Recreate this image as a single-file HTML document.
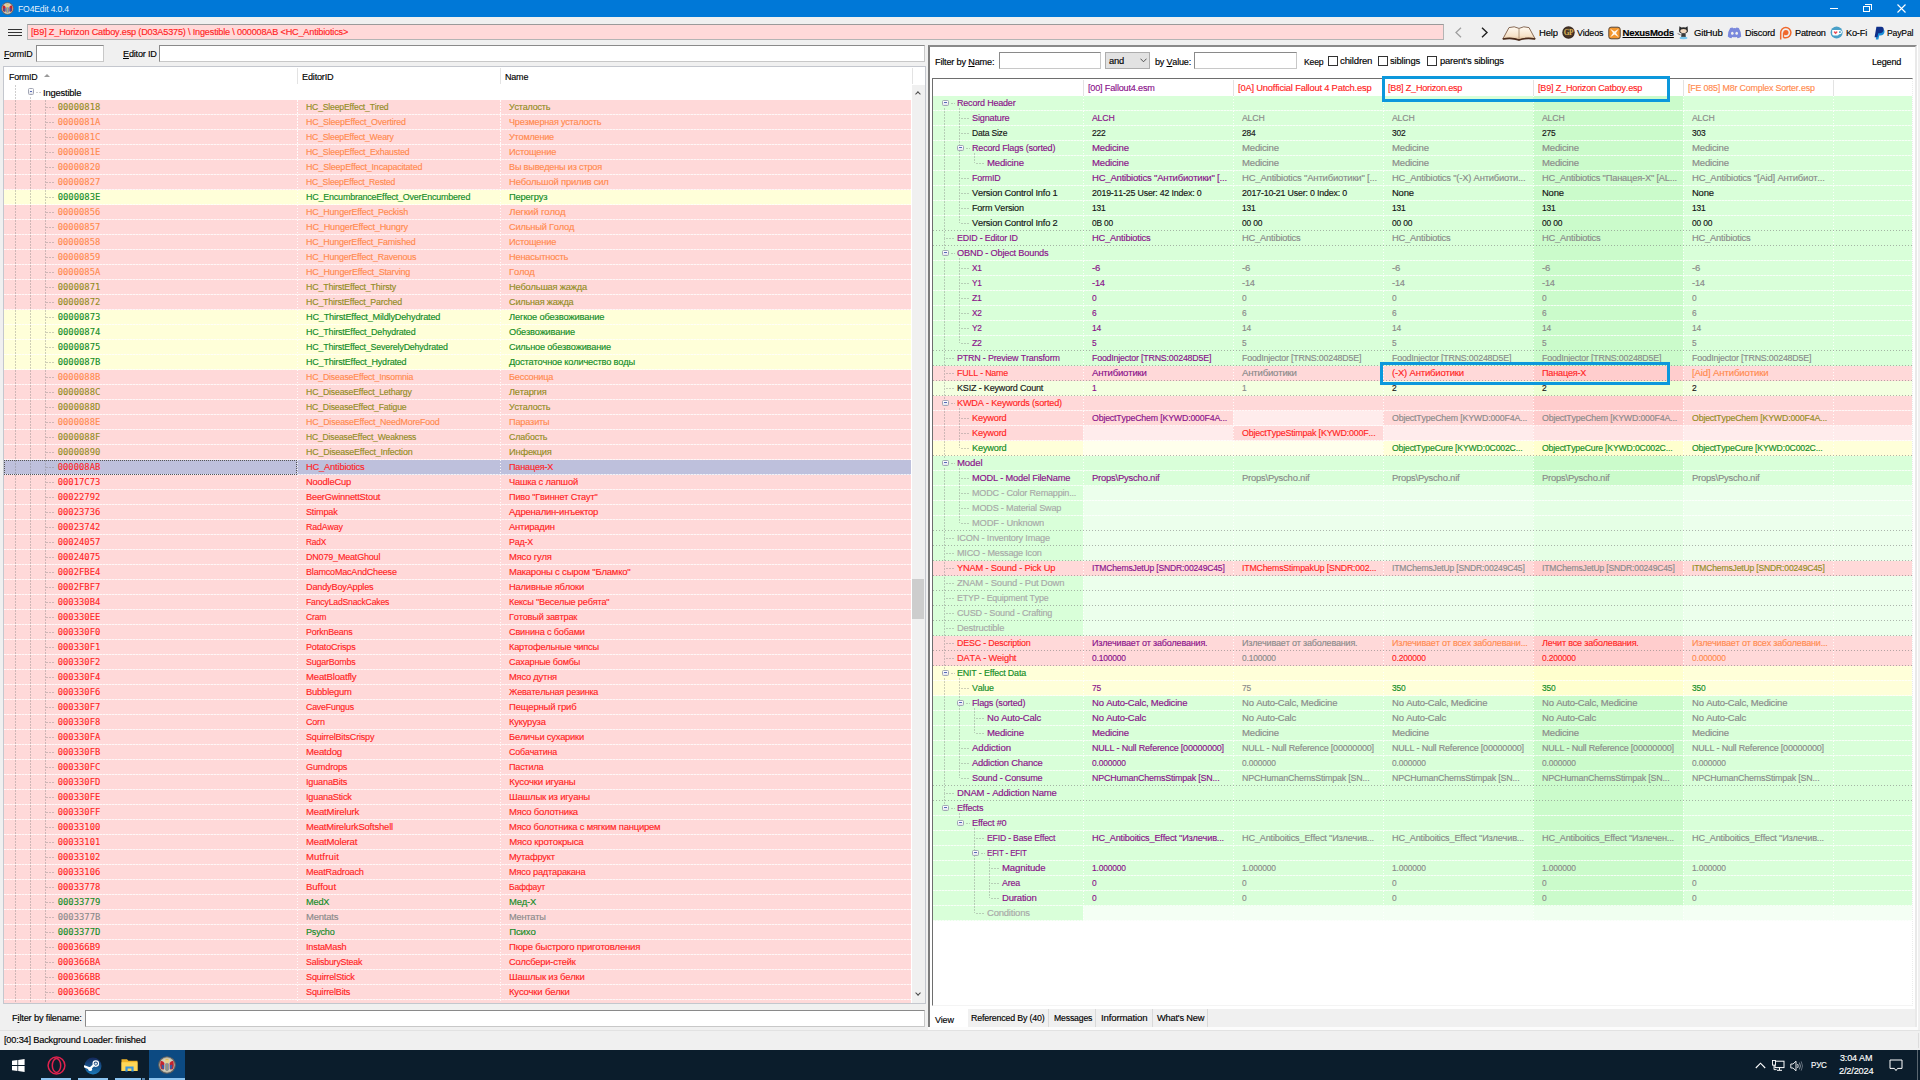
<!DOCTYPE html><html><head><meta charset="utf-8"><title>FO4Edit 4.0.4</title><style>*{margin:0;padding:0;box-sizing:border-box}
html,body{width:1920px;height:1080px;overflow:hidden;background:#f0f0f0}
body{position:relative;font-family:"Liberation Sans",sans-serif;font-size:9.6px;font-kerning:none;color:#000;line-height:14px;-webkit-text-stroke:0.15px}
span{transform-origin:0 50%}
i,b{display:block;position:absolute;font-style:normal;font-weight:normal}
.abs{position:absolute;white-space:nowrap}
.pu{color:#8a108a}.gy{color:#8a8a8a}.rd{color:#ff2424}.or{color:#ff8a4e}.gn{color:#128c26}.ol{color:#938c1e}.bk{color:#141414}.lg{color:#a8a8a8}
.rb{color:#ff0000;font-weight:bold}
#title{position:absolute;left:0;top:0;width:1920px;height:17.3px;background:#0078d7;color:#fff}
#title span{position:absolute;left:17.5px;top:1.6px;-webkit-text-stroke:0;color:rgba(255,255,255,.93)}
input,.inp{position:absolute;background:#fff;border:1px solid #7a7a7a}
.inp{border-color:#8a8a8a #c8c8c8 #c8c8c8 #8a8a8a}
#path{position:absolute;left:26.6px;top:24px;width:1417px;height:15.5px;background:#ffd9d9;border:1px solid #b4b4b4;border-top-color:#9a9a9a;color:#ff2424}
#path span{position:absolute;left:3.2px;top:0px;white-space:nowrap}
.tb{position:absolute;top:25.5px;white-space:nowrap;line-height:14px}
/* left tree */
#ltree{position:absolute;left:3px;top:66px;width:922.5px;height:937.5px;border:1px solid #c4c7ce;background:#fff;overflow:hidden}
#ltree span,#rtree span{position:absolute;white-space:nowrap;top:0}
.lhdr{position:absolute;left:0;top:0;width:921px;height:18px;background:#fff;line-height:18px}
.lhdr span{top:0.5px !important}
.hsep{width:1px;top:1px;height:16px;background:#e3e3e3}
.sortarr{left:39.5px;top:6.5px;width:0;height:0;border-left:3.2px solid transparent;border-right:3.2px solid transparent;border-bottom:3.6px solid #9a9a9a}
.lrow0{position:absolute;left:0;top:18px;width:907px;height:15px;line-height:14px}
.lrow0 span{top:0.5px !important}
.lr{position:absolute;left:0;width:907px;height:15px;line-height:14.5px}
.lr:after{content:"";position:absolute;left:0;right:0;bottom:0;height:1px;background:repeating-linear-gradient(90deg,rgba(255,255,255,.8) 0 2.2px,rgba(255,255,255,.4) 2.2px 3px)}
.lr.p{background:#ffd9d9}.lr.y{background:#ffffd9}.lr.s{background:#bec0dc}
.m{font-family:"DejaVu Sans Mono","Liberation Mono",monospace;font-size:8.85px;letter-spacing:0;-webkit-text-stroke:0.1px}

.box{z-index:2;width:6.8px;height:6.8px;border:1px solid #a2a6b4;border-radius:1.5px;background:linear-gradient(#fff,#e2e4ec)}
.box:after{content:"";position:absolute;left:1px;right:1px;top:1.9px;height:1px;background:#5568b8}
.hdot{height:1px;background:repeating-linear-gradient(90deg,rgba(120,120,120,.36) 0 2px,transparent 2px 3px)}
.vdot{width:1px;background:repeating-linear-gradient(180deg,rgba(120,120,120,.36) 0 2px,transparent 2px 3px)}
.vsep{width:1px;background:repeating-linear-gradient(180deg,rgba(255,255,255,.9) 0 1.5px,transparent 1.5px 3px)}
.focus{position:absolute;left:0;width:293px;height:15px;border:1px dotted #555}
.lscroll{position:absolute;left:907.5px;top:18px;width:13.5px;height:918px;background:#f0f0f0}
.thumb{left:0.5px;top:494px;width:11.5px;height:40px;background:#cdcdcd}
.sa{left:3.5px;width:6px;height:6px}
.sa:before{content:"";position:absolute;left:1.2px;top:1.6px;width:2.9px;height:2.9px;border-left:1.3px solid #4a4a4a;border-top:1.3px solid #4a4a4a;transform:rotate(45deg)}
.sa.up{top:5px}
.sa.dn{top:906px;transform:rotate(180deg)}
/* right panel */
#rpanel{position:absolute;left:928px;top:45px;width:989px;height:982px;background:linear-gradient(#fff 0,#fff 962.3px,#f0f0f0 962.3px);border-left:2px solid #7c7c7c;border-top:2px solid #8a8a8a;border-right:2.5px solid #e9e9e9;border-bottom:none;box-shadow:1px 0 0 #fff}
#rtree{position:absolute;left:932px;top:78px;width:981px;height:928px;border:1px solid #6e6e6e;border-right:1px dotted #ececec;border-bottom-color:#f4f4f4;background:#fff;overflow:hidden}
.rhdr{position:absolute;left:0;top:0;width:979px;height:17px;background:#fff;line-height:17.4px}
.rr{position:absolute;left:0;width:979px;height:15px;line-height:14px}
.rr:after{content:"";position:absolute;left:0;right:0;bottom:0;height:1px;background:repeating-linear-gradient(90deg,rgba(255,255,255,.8) 0 2.2px,rgba(255,255,255,.4) 2.2px 3px)}
.rr.gl:after{background:repeating-linear-gradient(90deg,rgba(120,120,120,.55) 0 1.5px,transparent 1.5px 3px)}
.cb{top:0;height:15px}
.coltint{background:rgba(0,60,0,.055)}
.vsep2{width:1px;background:repeating-linear-gradient(180deg,rgba(255,255,255,.9) 0 1.5px,transparent 1.5px 3px)}
.hl{position:absolute;border:3.4px solid #0c98dc}
.chk{position:absolute;width:10px;height:10px;border:1px solid #333;background:#fff;top:55.5px}
/* tabs */
.tab{position:absolute;top:1009px;height:17.5px;border-right:1px solid #d9d9d9;line-height:16px}
/* taskbar */
#task{position:absolute;left:0;top:1050px;width:1920px;height:30px;background:#0b1d2c;color:#fff}
</style></head><body>
<div id="title">
<svg style="position:absolute;left:1px;top:2px" width="13" height="13" viewBox="0 0 13 13"><circle cx="6.5" cy="6.5" r="6" fill="#b9b5a6" stroke="#5c5c5c" stroke-width="0.8"/><circle cx="6.5" cy="6.5" r="4.9" fill="#d6cfb8"/><path d="M1.9 3.6 Q3.6 3.2 4.6 5 L4.4 9.6 Q3 10.2 2 9 Q1.2 6.4 1.9 3.6 Z" fill="#c4222c"/><path d="M11.1 3.6 Q9.4 3.2 8.4 5 L8.6 9.6 Q10 10.2 11 9 Q11.8 6.4 11.1 3.6 Z" fill="#c4222c"/><path d="M2.6 6.2 L4.4 6.6 L4.4 9.4 L2.8 9 Z" fill="#3a58a0"/><path d="M10.4 6.2 L8.6 6.6 L8.6 9.4 L10.2 9 Z" fill="#3a58a0"/><ellipse cx="6.5" cy="3.6" rx="1.5" ry="1.7" fill="#e8cf86"/><path d="M5.2 2.8 Q6.5 1 7.8 2.8 Q6.5 2.2 5.2 2.8Z" fill="#e0b040"/><rect x="5.4" y="5.2" width="2.2" height="5.4" rx="0.6" fill="#4060a8"/><rect x="6.15" y="5.2" width="0.7" height="5.4" fill="#e4cc5a"/></svg>
<span style="letter-spacing:-0.200px;transform:scaleX(0.9006)">FO4Edit 4.0.4</span>
<i style="left:1829.5px;top:7.5px;width:8px;height:1px;background:#fff"></i>
<i style="left:1863px;top:5.5px;width:6.5px;height:6.5px;border:1px solid #fff"></i>
<i style="left:1865px;top:3.8px;width:6.5px;height:6.5px;border-top:1px solid #fff;border-right:1px solid #fff"></i>
<svg style="position:absolute;left:1897px;top:3.5px" width="9" height="9" viewBox="0 0 9 9"><path d="M0.5 0.5 L8.5 8.5 M8.5 0.5 L0.5 8.5" stroke="#fff" stroke-width="1.1" fill="none"/></svg>
</div>
<!-- hamburger -->
<i style="left:8px;top:29px;width:14px;height:1.1px;background:#333"></i><i style="left:8px;top:32px;width:14px;height:1.1px;background:#333"></i><i style="left:8px;top:35px;width:14px;height:1.1px;background:#333"></i>
<div id="path"><span style="letter-spacing:-0.200px;transform:scaleX(0.9526)">[B9] Z_Horizon Catboy.esp (D03A5375) \ Ingestible \ 000008AB &lt;HC_Antibiotics&gt;</span></div>
<!-- nav arrows -->
<svg style="position:absolute;left:1454px;top:27px" width="9" height="11" viewBox="0 0 9 11"><path d="M7 0.8 L2 5.5 L7 10.2" stroke="#a0a0a0" stroke-width="1.3" fill="none"/></svg>
<svg style="position:absolute;left:1479.5px;top:27px" width="9" height="11" viewBox="0 0 9 11"><path d="M2 0.8 L7 5.5 L2 10.2" stroke="#202020" stroke-width="1.4" fill="none"/></svg>
<!-- book -->
<svg style="position:absolute;left:1502px;top:24.5px" width="34" height="16" viewBox="0 0 34 16"><defs><linearGradient id="bk" x1="0" y1="0" x2="0" y2="1"><stop offset="0" stop-color="#fffaf2"/><stop offset="0.7" stop-color="#f6e2c8"/><stop offset="1" stop-color="#d8b48c"/></linearGradient></defs><path d="M0.8 14 L7 2.6 Q12.4 0.6 17 3.4 Q21.6 0.6 27 2.6 L33.2 14 Q24 12.4 17 15 Q10 12.4 0.8 14 Z" fill="url(#bk)" stroke="#7a5a44" stroke-width="0.9"/><path d="M17 3.4 L17 14.6" stroke="#a08468" stroke-width="0.8"/><path d="M0.8 14 Q10 12.4 17 15 Q24 12.4 33.2 14" stroke="#4a2c1c" stroke-width="1.7" fill="none"/></svg>
<span class="tb" style="left:1539px;letter-spacing:-0.200px;transform:scaleX(0.9901)">Help</span>
<svg style="position:absolute;left:1562px;top:26px" width="13" height="13" viewBox="0 0 13 13"><circle cx="6.5" cy="6.5" r="6.2" fill="#3a2a22"/><circle cx="6.5" cy="6.5" r="5" fill="#4a3828"/><text x="6.5" y="9.2" font-family="Liberation Serif" font-weight="bold" font-size="7.4" fill="#d8b45a" text-anchor="middle" letter-spacing="-0.4">GP</text></svg>
<span class="tb" style="left:1577px;letter-spacing:-0.200px;transform:scaleX(0.9326)">Videos</span>
<svg style="position:absolute;left:1608px;top:25.5px" width="13" height="14" viewBox="0 0 13 14"><rect x="0.8" y="1.2" width="11.4" height="11.6" rx="2.2" fill="#f4962c" stroke="#5a4634" stroke-width="1"/><path d="M2.2 2.8 L6.5 5.6 L10.8 2.8 L8 7 L10.8 11.2 L6.5 8.4 L2.2 11.2 L5 7 Z" fill="#fff6ea"/></svg>
<span class="tb" style="left:1622.5px;font-weight:bold;text-decoration:underline;letter-spacing:-0.28px">NexusMods</span>
<svg style="position:absolute;left:1677px;top:25px" width="13" height="15" viewBox="0 0 13 15"><path d="M2.4 1.2 L4.4 2.6 Q6.5 2 8.6 2.6 L10.6 1.2 L10.8 4.4 Q11.6 6.4 10 7.8 Q8.4 8.8 6.5 8.8 Q4.6 8.8 3 7.8 Q1.4 6.4 2.2 4.4 Z" fill="#2a2a2a"/><ellipse cx="6.5" cy="6" rx="3.2" ry="2" fill="#f0d8c0"/><path d="M4.4 8.6 L4.2 12.4 L8.8 12.4 L8.6 8.6 Z" fill="#3a3a3a"/><ellipse cx="6.5" cy="13" rx="4" ry="1.2" fill="#78c8f0"/><path d="M0.6 8.6 L3.6 9.8" stroke="#555" stroke-width="0.8"/></svg>
<span class="tb" style="left:1694px;letter-spacing:-0.200px;transform:scaleX(0.9939)">GitHub</span>
<svg style="position:absolute;left:1727px;top:26.5px" width="15" height="12" viewBox="0 0 15 12"><path d="M3.2 1 Q5 0.3 5.6 0.5 L6 1.2 Q7.5 1 9 1.2 L9.4 0.5 Q10 0.3 11.8 1 Q14.2 4.6 14.2 9.4 Q12.6 10.8 10.6 11.2 L9.8 9.9 Q7.5 10.5 5.2 9.9 L4.4 11.2 Q2.4 10.8 0.8 9.4 Q0.8 4.6 3.2 1 Z" fill="#7a88dc"/><ellipse cx="5.3" cy="6.3" rx="1.3" ry="1.5" fill="#f0f0f0"/><ellipse cx="9.7" cy="6.3" rx="1.3" ry="1.5" fill="#f0f0f0"/></svg>
<span class="tb" style="left:1745px;letter-spacing:-0.200px;transform:scaleX(0.9636)">Discord</span>
<svg style="position:absolute;left:1779px;top:25.5px" width="13" height="14" viewBox="0 0 13 14"><path d="M1.7 13.6 L1.7 6.6 A5.1 5.1 0 1 1 6.8 11.7 L4.6 11.7" fill="none" stroke="#f0682c" stroke-width="1.5"/><circle cx="6.9" cy="6.6" r="2.6" fill="#f0682c"/><path d="M4.5 6.6 L4.5 11.7" stroke="#f0682c" stroke-width="1.4"/></svg>
<span class="tb" style="left:1795px;letter-spacing:-0.200px;transform:scaleX(0.9544)">Patreon</span>
<svg style="position:absolute;left:1830px;top:26px" width="14" height="13" viewBox="0 0 14 13"><circle cx="6.6" cy="6.5" r="6" fill="#4aa0c8"/><path d="M2.2 4 L9 4 L9 8 Q9 9.4 7.6 9.4 L3.6 9.4 Q2.2 9.4 2.2 8 Z" fill="#fff"/><path d="M9 4.6 Q11.6 4.4 11.4 6.2 Q11.2 7.8 9 7.6" fill="none" stroke="#fff" stroke-width="1.1"/><path d="M5.6 8.2 L3.8 6.4 Q3.4 5.4 4.4 5.2 Q5.2 5.2 5.6 5.9 Q6 5.2 6.8 5.2 Q7.8 5.4 7.4 6.4 Z" fill="#e8505a"/></svg>
<span class="tb" style="left:1845.5px;letter-spacing:-0.200px;transform:scaleX(0.9574)">Ko-Fi</span>
<svg style="position:absolute;left:1873.5px;top:25.5px" width="12" height="14" viewBox="0 0 12 14"><path d="M3.4 3 L8 3 Q11 3.4 10.4 6.4 Q9.6 9.4 6.4 9.4 L5.2 9.4 L4.4 13.4 L1.8 13.4 Z" fill="#1a90d8"/><path d="M2.4 0.8 L7.2 0.8 Q10.2 1.2 9.6 4.2 Q8.8 7.2 5.6 7.2 L4.2 7.2 L3.4 11.2 L0.6 11.2 Z" fill="#10308a"/></svg>
<span class="tb" style="left:1886.5px;letter-spacing:-0.200px;transform:scaleX(0.8986)">PayPal</span>
<!-- FormID / Editor ID -->
<span class="abs" style="left:4px;top:47px;letter-spacing:-0.200px;transform:scaleX(0.9254)"><u>F</u>ormID</span>
<div class="inp" style="left:36px;top:45px;width:67.5px;height:17px"></div>
<span class="abs" style="left:123px;top:47px;letter-spacing:-0.200px;transform:scaleX(0.9495)"><u>E</u>ditor ID</span>
<div class="inp" style="left:159px;top:45px;width:765.5px;height:17px"></div>
<!-- right panel frame -->
<div id="rpanel"></div>
<span class="abs" style="left:934.5px;top:55px;letter-spacing:-0.200px;transform:scaleX(0.9544)">Filter by <u>N</u>ame:</span>
<div class="inp" style="left:999px;top:52px;width:102px;height:16.5px"></div>
<div class="abs" style="left:1105px;top:52px;width:45px;height:16.5px;background:#e2e2e2;border:1px solid #adadad"><span style="position:absolute;left:3px;top:0.5px;letter-spacing:-0.200px;transform:scaleX(0.9732)">and</span><svg style="position:absolute;left:34px;top:5px" width="7" height="5" viewBox="0 0 7 5"><path d="M0.5 0.7 L3.5 3.8 L6.5 0.7" stroke="#444" stroke-width="0.9" fill="none"/></svg></div>
<span class="abs" style="left:1154.5px;top:55px;letter-spacing:-0.200px;transform:scaleX(0.9419)">by <u>V</u>alue:</span>
<div class="inp" style="left:1194px;top:52px;width:103px;height:16.5px"></div>
<span class="abs" style="left:1304px;top:55px;letter-spacing:-0.200px;transform:scaleX(0.9021)">Keep</span>
<i class="chk" style="left:1327.5px"></i><span class="abs" style="left:1340px;top:54.2px;letter-spacing:-0.170px">children</span>
<i class="chk" style="left:1377.5px"></i><span class="abs" style="left:1390px;top:54.2px;letter-spacing:-0.200px;transform:scaleX(0.9866)">siblings</span>
<i class="chk" style="left:1427px"></i><span class="abs" style="left:1439.5px;top:54.2px;letter-spacing:-0.200px;transform:scaleX(0.9789)">parent's siblings</span>
<span class="abs" style="left:1871.5px;top:54.8px;letter-spacing:-0.200px;transform:scaleX(0.9489)">Legend</span>

<div id="ltree">
<div class="lhdr"><span style="left:4.5px;letter-spacing:-0.200px;transform:scaleX(0.9254)">FormID</span><i class="sortarr"></i><b class="hsep" style="left:292.5px"></b><span style="left:297.5px;letter-spacing:-0.200px;transform:scaleX(0.9524)">EditorID</span><b class="hsep" style="left:496px"></b><span style="left:500.8px;letter-spacing:-0.200px;transform:scaleX(0.9374)">Name</span><b class="hsep" style="left:908px"></b></div>
<div class="lrow0"><i class="box" style="left:23.6px;top:3.2px"></i><i class="hdot" style="left:32px;width:5px;top:7px"></i><span style="left:39px;letter-spacing:-0.200px;transform:scaleX(0.9786)">Ingestible</span></div>
<div class="lr p ol" style="top:33px"><i class="hdot" style="left:42px;width:9px;top:7px"></i><span class="m" style="left:53.7px">00000818</span><span class="e" style="left:302px;letter-spacing:-0.200px;transform:scaleX(0.9016)">HC_SleepEffect_Tired</span><span class="n" style="left:505.3px;letter-spacing:-0.200px;transform:scaleX(0.9381)">Усталость</span></div>
<div class="lr p or" style="top:48px"><i class="hdot" style="left:42px;width:9px;top:7px"></i><span class="m" style="left:53.7px">0000081A</span><span class="e" style="left:302px;letter-spacing:-0.200px;transform:scaleX(0.9210)">HC_SleepEffect_Overtired</span><span class="n" style="left:505.3px;letter-spacing:-0.200px;transform:scaleX(0.9437)">Чрезмерная усталость</span></div>
<div class="lr p or" style="top:63px"><i class="hdot" style="left:42px;width:9px;top:7px"></i><span class="m" style="left:53.7px">0000081C</span><span class="e" style="left:302px;letter-spacing:-0.200px;transform:scaleX(0.9012)">HC_SleepEffect_Weary</span><span class="n" style="left:505.3px;letter-spacing:-0.200px;transform:scaleX(0.9457)">Утомление</span></div>
<div class="lr p or" style="top:78px"><i class="hdot" style="left:42px;width:9px;top:7px"></i><span class="m" style="left:53.7px">0000081E</span><span class="e" style="left:302px;letter-spacing:-0.200px;transform:scaleX(0.9064)">HC_SleepEffect_Exhausted</span><span class="n" style="left:505.3px;letter-spacing:-0.200px;transform:scaleX(0.9667)">Истощение</span></div>
<div class="lr p or" style="top:93px"><i class="hdot" style="left:42px;width:9px;top:7px"></i><span class="m" style="left:53.7px">00000820</span><span class="e" style="left:302px;letter-spacing:-0.200px;transform:scaleX(0.9290)">HC_SleepEffect_Incapacitated</span><span class="n" style="left:505.3px;letter-spacing:-0.200px;transform:scaleX(0.9515)">Вы выведены из строя</span></div>
<div class="lr p or" style="top:108px"><i class="hdot" style="left:42px;width:9px;top:7px"></i><span class="m" style="left:53.7px">00000827</span><span class="e" style="left:302px;letter-spacing:-0.200px;transform:scaleX(0.8939)">HC_SleepEffect_Rested</span><span class="n" style="left:505.3px;letter-spacing:-0.200px;transform:scaleX(0.9856)">Небольшой прилив сил</span></div>
<div class="lr y gn" style="top:123px"><i class="hdot" style="left:42px;width:9px;top:7px"></i><span class="m" style="left:53.7px">0000083E</span><span class="e" style="left:302px;letter-spacing:-0.200px;transform:scaleX(0.9304)">HC_EncumbranceEffect_OverEncumbered</span><span class="n" style="left:505.3px;letter-spacing:-0.200px;transform:scaleX(0.9717)">Перегруз</span></div>
<div class="lr p or" style="top:138px"><i class="hdot" style="left:42px;width:9px;top:7px"></i><span class="m" style="left:53.7px">00000856</span><span class="e" style="left:302px;letter-spacing:-0.200px;transform:scaleX(0.9309)">HC_HungerEffect_Peckish</span><span class="n" style="left:505.3px;letter-spacing:-0.157px">Легкий голод</span></div>
<div class="lr p or" style="top:153px"><i class="hdot" style="left:42px;width:9px;top:7px"></i><span class="m" style="left:53.7px">00000857</span><span class="e" style="left:302px;letter-spacing:-0.200px;transform:scaleX(0.9523)">HC_HungerEffect_Hungry</span><span class="n" style="left:505.3px;letter-spacing:-0.200px;transform:scaleX(0.9648)">Сильный Голод</span></div>
<div class="lr p or" style="top:168px"><i class="hdot" style="left:42px;width:9px;top:7px"></i><span class="m" style="left:53.7px">00000858</span><span class="e" style="left:302px;letter-spacing:-0.200px;transform:scaleX(0.9287)">HC_HungerEffect_Famished</span><span class="n" style="left:505.3px;letter-spacing:-0.200px;transform:scaleX(0.9667)">Истощение</span></div>
<div class="lr p or" style="top:183px"><i class="hdot" style="left:42px;width:9px;top:7px"></i><span class="m" style="left:53.7px">00000859</span><span class="e" style="left:302px;letter-spacing:-0.200px;transform:scaleX(0.9266)">HC_HungerEffect_Ravenous</span><span class="n" style="left:505.3px;letter-spacing:-0.200px;transform:scaleX(0.9644)">Ненасытность</span></div>
<div class="lr p or" style="top:198px"><i class="hdot" style="left:42px;width:9px;top:7px"></i><span class="m" style="left:53.7px">0000085A</span><span class="e" style="left:302px;letter-spacing:-0.200px;transform:scaleX(0.9394)">HC_HungerEffect_Starving</span><span class="n" style="left:505.3px;letter-spacing:-0.200px;transform:scaleX(0.9773)">Голод</span></div>
<div class="lr p ol" style="top:213px"><i class="hdot" style="left:42px;width:9px;top:7px"></i><span class="m" style="left:53.7px">00000871</span><span class="e" style="left:302px;letter-spacing:-0.200px;transform:scaleX(0.9251)">HC_ThirstEffect_Thirsty</span><span class="n" style="left:505.3px;letter-spacing:-0.200px;transform:scaleX(0.9659)">Небольшая жажда</span></div>
<div class="lr p ol" style="top:228px"><i class="hdot" style="left:42px;width:9px;top:7px"></i><span class="m" style="left:53.7px">00000872</span><span class="e" style="left:302px;letter-spacing:-0.200px;transform:scaleX(0.9210)">HC_ThirstEffect_Parched</span><span class="n" style="left:505.3px;letter-spacing:-0.200px;transform:scaleX(0.9494)">Сильная жажда</span></div>
<div class="lr y gn" style="top:243px"><i class="hdot" style="left:42px;width:9px;top:7px"></i><span class="m" style="left:53.7px">00000873</span><span class="e" style="left:302px;letter-spacing:-0.200px;transform:scaleX(0.9532)">HC_ThirstEffect_MildlyDehydrated</span><span class="n" style="left:505.3px;letter-spacing:-0.200px;transform:scaleX(0.9726)">Легкое обезвоживание</span></div>
<div class="lr y gn" style="top:258px"><i class="hdot" style="left:42px;width:9px;top:7px"></i><span class="m" style="left:53.7px">00000874</span><span class="e" style="left:302px;letter-spacing:-0.200px;transform:scaleX(0.9319)">HC_ThirstEffect_Dehydrated</span><span class="n" style="left:505.3px;letter-spacing:-0.200px;transform:scaleX(0.9596)">Обезвоживание</span></div>
<div class="lr y gn" style="top:273px"><i class="hdot" style="left:42px;width:9px;top:7px"></i><span class="m" style="left:53.7px">00000875</span><span class="e" style="left:302px;letter-spacing:-0.200px;transform:scaleX(0.9250)">HC_ThirstEffect_SeverelyDehydrated</span><span class="n" style="left:505.3px;letter-spacing:-0.200px;transform:scaleX(0.9569)">Сильное обезвоживание</span></div>
<div class="lr y gn" style="top:288px"><i class="hdot" style="left:42px;width:9px;top:7px"></i><span class="m" style="left:53.7px">0000087B</span><span class="e" style="left:302px;letter-spacing:-0.200px;transform:scaleX(0.9372)">HC_ThirstEffect_Hydrated</span><span class="n" style="left:505.3px;letter-spacing:-0.200px;transform:scaleX(0.9659)">Достаточное количество воды</span></div>
<div class="lr p or" style="top:303px"><i class="hdot" style="left:42px;width:9px;top:7px"></i><span class="m" style="left:53.7px">0000088B</span><span class="e" style="left:302px;letter-spacing:-0.200px;transform:scaleX(0.9112)">HC_DiseaseEffect_Insomnia</span><span class="n" style="left:505.3px;letter-spacing:-0.200px;transform:scaleX(0.9562)">Бессоница</span></div>
<div class="lr p ol" style="top:318px"><i class="hdot" style="left:42px;width:9px;top:7px"></i><span class="m" style="left:53.7px">0000088C</span><span class="e" style="left:302px;letter-spacing:-0.200px;transform:scaleX(0.9107)">HC_DiseaseEffect_Lethargy</span><span class="n" style="left:505.3px;letter-spacing:-0.200px;transform:scaleX(0.9571)">Летаргия</span></div>
<div class="lr p ol" style="top:333px"><i class="hdot" style="left:42px;width:9px;top:7px"></i><span class="m" style="left:53.7px">0000088D</span><span class="e" style="left:302px;letter-spacing:-0.200px;transform:scaleX(0.9056)">HC_DiseaseEffect_Fatigue</span><span class="n" style="left:505.3px;letter-spacing:-0.200px;transform:scaleX(0.9381)">Усталость</span></div>
<div class="lr p or" style="top:348px"><i class="hdot" style="left:42px;width:9px;top:7px"></i><span class="m" style="left:53.7px">0000088E</span><span class="e" style="left:302px;letter-spacing:-0.200px;transform:scaleX(0.9229)">HC_DiseaseEffect_NeedMoreFood</span><span class="n" style="left:505.3px;letter-spacing:-0.200px;transform:scaleX(0.9555)">Паразиты</span></div>
<div class="lr p ol" style="top:363px"><i class="hdot" style="left:42px;width:9px;top:7px"></i><span class="m" style="left:53.7px">0000088F</span><span class="e" style="left:302px;letter-spacing:-0.200px;transform:scaleX(0.8922)">HC_DiseaseEffect_Weakness</span><span class="n" style="left:505.3px;letter-spacing:-0.200px;transform:scaleX(0.9259)">Слабость</span></div>
<div class="lr p ol" style="top:378px"><i class="hdot" style="left:42px;width:9px;top:7px"></i><span class="m" style="left:53.7px">00000890</span><span class="e" style="left:302px;letter-spacing:-0.200px;transform:scaleX(0.9273)">HC_DiseaseEffect_Infection</span><span class="n" style="left:505.3px;letter-spacing:-0.200px;transform:scaleX(0.9691)">Инфекция</span></div>
<div class="lr s rd" style="top:393px"><i class="hdot" style="left:42px;width:9px;top:7px"></i><span class="m" style="left:53.7px">000008AB</span><span class="e" style="left:302px;letter-spacing:-0.200px;transform:scaleX(0.9726)">HC_Antibiotics</span><span class="n" style="left:505.3px;letter-spacing:-0.200px;transform:scaleX(0.9472)">Панацея-X</span></div>
<div class="lr p rd" style="top:408px"><i class="hdot" style="left:42px;width:9px;top:7px"></i><span class="m" style="left:53.7px">00017C73</span><span class="e" style="left:302px;letter-spacing:-0.200px;transform:scaleX(0.9736)">NoodleCup</span><span class="n" style="left:505.3px;letter-spacing:-0.200px;transform:scaleX(0.9736)">Чашка с лапшой</span></div>
<div class="lr p rd" style="top:423px"><i class="hdot" style="left:42px;width:9px;top:7px"></i><span class="m" style="left:53.7px">00022792</span><span class="e" style="left:302px;letter-spacing:-0.200px;transform:scaleX(0.9621)">BeerGwinnettStout</span><span class="n" style="left:505.3px;letter-spacing:-0.200px;transform:scaleX(0.9545)">Пиво "Гвиннет Стаут"</span></div>
<div class="lr p rd" style="top:438px"><i class="hdot" style="left:42px;width:9px;top:7px"></i><span class="m" style="left:53.7px">00023736</span><span class="e" style="left:302px;letter-spacing:-0.200px;transform:scaleX(0.9467)">Stimpak</span><span class="n" style="left:505.3px;letter-spacing:-0.200px;transform:scaleX(0.9865)">Адреналин-инъектор</span></div>
<div class="lr p rd" style="top:453px"><i class="hdot" style="left:42px;width:9px;top:7px"></i><span class="m" style="left:53.7px">00023742</span><span class="e" style="left:302px;letter-spacing:-0.200px;transform:scaleX(0.9262)">RadAway</span><span class="n" style="left:505.3px;letter-spacing:-0.200px;transform:scaleX(0.9815)">Антирадин</span></div>
<div class="lr p rd" style="top:468px"><i class="hdot" style="left:42px;width:9px;top:7px"></i><span class="m" style="left:53.7px">00024057</span><span class="e" style="left:302px;letter-spacing:-0.200px;transform:scaleX(0.8725)">RadX</span><span class="n" style="left:505.3px;letter-spacing:-0.200px;transform:scaleX(0.9250)">Рад-X</span></div>
<div class="lr p rd" style="top:483px"><i class="hdot" style="left:42px;width:9px;top:7px"></i><span class="m" style="left:53.7px">00024075</span><span class="e" style="left:302px;letter-spacing:-0.200px;transform:scaleX(0.9379)">DN079_MeatGhoul</span><span class="n" style="left:505.3px;letter-spacing:-0.200px;transform:scaleX(0.9868)">Мясо гуля</span></div>
<div class="lr p rd" style="top:498px"><i class="hdot" style="left:42px;width:9px;top:7px"></i><span class="m" style="left:53.7px">0002FBE4</span><span class="e" style="left:302px;letter-spacing:-0.200px;transform:scaleX(0.9385)">BlamcoMacAndCheese</span><span class="n" style="left:505.3px;letter-spacing:-0.200px;transform:scaleX(0.9898)">Макароны с сыром "Бламко"</span></div>
<div class="lr p rd" style="top:513px"><i class="hdot" style="left:42px;width:9px;top:7px"></i><span class="m" style="left:53.7px">0002FBF7</span><span class="e" style="left:302px;letter-spacing:-0.200px;transform:scaleX(0.9530)">DandyBoyApples</span><span class="n" style="left:505.3px;letter-spacing:-0.200px;transform:scaleX(0.9770)">Наливные яблоки</span></div>
<div class="lr p rd" style="top:528px"><i class="hdot" style="left:42px;width:9px;top:7px"></i><span class="m" style="left:53.7px">000330B4</span><span class="e" style="left:302px;letter-spacing:-0.200px;transform:scaleX(0.9006)">FancyLadSnackCakes</span><span class="n" style="left:505.3px;letter-spacing:-0.200px;transform:scaleX(0.9532)">Кексы "Веселые ребята"</span></div>
<div class="lr p rd" style="top:543px"><i class="hdot" style="left:42px;width:9px;top:7px"></i><span class="m" style="left:53.7px">000330EE</span><span class="e" style="left:302px;letter-spacing:-0.200px;transform:scaleX(0.8936)">Cram</span><span class="n" style="left:505.3px;letter-spacing:-0.200px;transform:scaleX(0.9555)">Готовый завтрак</span></div>
<div class="lr p rd" style="top:558px"><i class="hdot" style="left:42px;width:9px;top:7px"></i><span class="m" style="left:53.7px">000330F0</span><span class="e" style="left:302px;letter-spacing:-0.200px;transform:scaleX(0.9246)">PorknBeans</span><span class="n" style="left:505.3px;letter-spacing:-0.200px;transform:scaleX(0.9554)">Свинина с бобами</span></div>
<div class="lr p rd" style="top:573px"><i class="hdot" style="left:42px;width:9px;top:7px"></i><span class="m" style="left:53.7px">000330F1</span><span class="e" style="left:302px;letter-spacing:-0.200px;transform:scaleX(0.9420)">PotatoCrisps</span><span class="n" style="left:505.3px;letter-spacing:-0.200px;transform:scaleX(0.9602)">Картофельные чипсы</span></div>
<div class="lr p rd" style="top:588px"><i class="hdot" style="left:42px;width:9px;top:7px"></i><span class="m" style="left:53.7px">000330F2</span><span class="e" style="left:302px;letter-spacing:-0.200px;transform:scaleX(0.9254)">SugarBombs</span><span class="n" style="left:505.3px;letter-spacing:-0.200px;transform:scaleX(0.9500)">Сахарные бомбы</span></div>
<div class="lr p rd" style="top:603px"><i class="hdot" style="left:42px;width:9px;top:7px"></i><span class="m" style="left:53.7px">000330F4</span><span class="e" style="left:302px;letter-spacing:-0.200px">MeatBloatfly</span><span class="n" style="left:505.3px;letter-spacing:-0.200px;transform:scaleX(0.9734)">Мясо дутня</span></div>
<div class="lr p rd" style="top:618px"><i class="hdot" style="left:42px;width:9px;top:7px"></i><span class="m" style="left:53.7px">000330F6</span><span class="e" style="left:302px;letter-spacing:-0.200px;transform:scaleX(0.9785)">Bubblegum</span><span class="n" style="left:505.3px;letter-spacing:-0.200px;transform:scaleX(0.9397)">Жевательная резинка</span></div>
<div class="lr p rd" style="top:633px"><i class="hdot" style="left:42px;width:9px;top:7px"></i><span class="m" style="left:53.7px">000330F7</span><span class="e" style="left:302px;letter-spacing:-0.200px;transform:scaleX(0.9156)">CaveFungus</span><span class="n" style="left:505.3px;letter-spacing:-0.200px;transform:scaleX(0.9903)">Пещерный гриб</span></div>
<div class="lr p rd" style="top:648px"><i class="hdot" style="left:42px;width:9px;top:7px"></i><span class="m" style="left:53.7px">000330F8</span><span class="e" style="left:302px;letter-spacing:-0.200px;transform:scaleX(0.9374)">Corn</span><span class="n" style="left:505.3px;letter-spacing:-0.200px;transform:scaleX(0.9752)">Кукуруза</span></div>
<div class="lr p rd" style="top:663px"><i class="hdot" style="left:42px;width:9px;top:7px"></i><span class="m" style="left:53.7px">000330FA</span><span class="e" style="left:302px;letter-spacing:-0.200px;transform:scaleX(0.9392)">SquirrelBitsCrispy</span><span class="n" style="left:505.3px;letter-spacing:-0.200px;transform:scaleX(0.9683)">Беличьи сухарики</span></div>
<div class="lr p rd" style="top:678px"><i class="hdot" style="left:42px;width:9px;top:7px"></i><span class="m" style="left:53.7px">000330FB</span><span class="e" style="left:302px;letter-spacing:-0.193px">Meatdog</span><span class="n" style="left:505.3px;letter-spacing:-0.200px;transform:scaleX(0.9258)">Собачатина</span></div>
<div class="lr p rd" style="top:693px"><i class="hdot" style="left:42px;width:9px;top:7px"></i><span class="m" style="left:53.7px">000330FC</span><span class="e" style="left:302px;letter-spacing:-0.200px;transform:scaleX(0.9546)">Gumdrops</span><span class="n" style="left:505.3px;letter-spacing:-0.200px;transform:scaleX(0.9492)">Пастила</span></div>
<div class="lr p rd" style="top:708px"><i class="hdot" style="left:42px;width:9px;top:7px"></i><span class="m" style="left:53.7px">000330FD</span><span class="e" style="left:302px;letter-spacing:-0.200px;transform:scaleX(0.9513)">IguanaBits</span><span class="n" style="left:505.3px;letter-spacing:-0.200px">Кусочки игуаны</span></div>
<div class="lr p rd" style="top:723px"><i class="hdot" style="left:42px;width:9px;top:7px"></i><span class="m" style="left:53.7px">000330FE</span><span class="e" style="left:302px;letter-spacing:-0.200px;transform:scaleX(0.9539)">IguanaStick</span><span class="n" style="left:505.3px;letter-spacing:-0.200px;transform:scaleX(0.9918)">Шашлык из игуаны</span></div>
<div class="lr p rd" style="top:738px"><i class="hdot" style="left:42px;width:9px;top:7px"></i><span class="m" style="left:53.7px">000330FF</span><span class="e" style="left:302px;letter-spacing:-0.185px">MeatMirelurk</span><span class="n" style="left:505.3px;letter-spacing:-0.200px;transform:scaleX(0.9915)">Мясо болотника</span></div>
<div class="lr p rd" style="top:753px"><i class="hdot" style="left:42px;width:9px;top:7px"></i><span class="m" style="left:53.7px">00033100</span><span class="e" style="left:302px;letter-spacing:-0.200px;transform:scaleX(0.9877)">MeatMirelurkSoftshell</span><span class="n" style="left:505.3px;letter-spacing:-0.200px;transform:scaleX(0.9820)">Мясо болотника с мягким панцирем</span></div>
<div class="lr p rd" style="top:768px"><i class="hdot" style="left:42px;width:9px;top:7px"></i><span class="m" style="left:53.7px">00033101</span><span class="e" style="left:302px;letter-spacing:-0.200px">MeatMolerat</span><span class="n" style="left:505.3px;letter-spacing:-0.197px">Мясо кротокрыса</span></div>
<div class="lr p rd" style="top:783px"><i class="hdot" style="left:42px;width:9px;top:7px"></i><span class="m" style="left:53.7px">00033102</span><span class="e" style="left:302px;letter-spacing:0.124px">Mutfruit</span><span class="n" style="left:505.3px;letter-spacing:-0.200px;transform:scaleX(0.9658)">Мутафрукт</span></div>
<div class="lr p rd" style="top:798px"><i class="hdot" style="left:42px;width:9px;top:7px"></i><span class="m" style="left:53.7px">00033106</span><span class="e" style="left:302px;letter-spacing:-0.200px;transform:scaleX(0.9537)">MeatRadroach</span><span class="n" style="left:505.3px;letter-spacing:-0.200px;transform:scaleX(0.9601)">Мясо радтаракана</span></div>
<div class="lr p rd" style="top:813px"><i class="hdot" style="left:42px;width:9px;top:7px"></i><span class="m" style="left:53.7px">00033778</span><span class="e" style="left:302px;letter-spacing:-0.060px">Buffout</span><span class="n" style="left:505.3px;letter-spacing:-0.200px;transform:scaleX(0.8873)">Баффаут</span></div>
<div class="lr p gn" style="top:828px"><i class="hdot" style="left:42px;width:9px;top:7px"></i><span class="m" style="left:53.7px">00033779</span><span class="e" style="left:302px;letter-spacing:-0.200px;transform:scaleX(0.9578)">MedX</span><span class="n" style="left:505.3px;letter-spacing:-0.200px;transform:scaleX(0.9804)">Мед-X</span></div>
<div class="lr p gy" style="top:843px"><i class="hdot" style="left:42px;width:9px;top:7px"></i><span class="m" style="left:53.7px">0003377B</span><span class="e" style="left:302px;letter-spacing:-0.200px;transform:scaleX(0.9848)">Mentats</span><span class="n" style="left:505.3px;letter-spacing:-0.200px;transform:scaleX(0.9604)">Ментаты</span></div>
<div class="lr p gn" style="top:858px"><i class="hdot" style="left:42px;width:9px;top:7px"></i><span class="m" style="left:53.7px">0003377D</span><span class="e" style="left:302px;letter-spacing:-0.200px;transform:scaleX(0.9413)">Psycho</span><span class="n" style="left:505.3px;letter-spacing:-0.191px">Психо</span></div>
<div class="lr p rd" style="top:873px"><i class="hdot" style="left:42px;width:9px;top:7px"></i><span class="m" style="left:53.7px">000366B9</span><span class="e" style="left:302px;letter-spacing:-0.200px;transform:scaleX(0.9533)">InstaMash</span><span class="n" style="left:505.3px;letter-spacing:-0.200px;transform:scaleX(0.9926)">Пюре быстрого приготовления</span></div>
<div class="lr p rd" style="top:888px"><i class="hdot" style="left:42px;width:9px;top:7px"></i><span class="m" style="left:53.7px">000366BA</span><span class="e" style="left:302px;letter-spacing:-0.200px;transform:scaleX(0.9188)">SalisburySteak</span><span class="n" style="left:505.3px;letter-spacing:-0.200px;transform:scaleX(0.9713)">Солсбери-стейк</span></div>
<div class="lr p rd" style="top:903px"><i class="hdot" style="left:42px;width:9px;top:7px"></i><span class="m" style="left:53.7px">000366BB</span><span class="e" style="left:302px;letter-spacing:-0.200px;transform:scaleX(0.9508)">SquirrelStick</span><span class="n" style="left:505.3px;letter-spacing:-0.200px;transform:scaleX(0.9879)">Шашлык из белки</span></div>
<div class="lr p rd" style="top:918px"><i class="hdot" style="left:42px;width:9px;top:7px"></i><span class="m" style="left:53.7px">000366BC</span><span class="e" style="left:302px;letter-spacing:-0.200px;transform:scaleX(0.9480)">SquirrelBits</span><span class="n" style="left:505.3px;letter-spacing:-0.200px;transform:scaleX(0.9928)">Кусочки белки</span></div>
<div class="lr p" style="top:933px"></div>
<i class="vdot" style="left:11px;top:18px;height:920px"></i><i class="vdot" style="left:26px;top:30px;height:908px"></i><i class="vdot" style="left:41px;top:33px;height:905px"></i>
<i class="vsep" style="left:292.5px;top:33px;height:905px"></i><i class="vsep" style="left:496px;top:33px;height:905px"></i>
<div class="focus" style="top:392.5px"></div>
<div class="lscroll"><i class="sa up"></i><i class="thumb"></i><i class="sa dn"></i></div>
</div>
<div id="rtree">
<div class="rhdr">
<b class="hsep" style="left:149.5px"></b><span class="pu" style="left:154.5px;letter-spacing:-0.200px;transform:scaleX(0.9504)">[00] Fallout4.esm</span>
<b class="hsep" style="left:299.5px"></b><span class="rd" style="left:304.5px;letter-spacing:-0.200px;transform:scaleX(0.9740)">[0A] Unofficial Fallout 4 Patch.esp</span>
<b class="hsep" style="left:449.5px"></b><span class="rd" style="left:454.5px;letter-spacing:-0.200px;transform:scaleX(0.9451)">[B8] Z_Horizon.esp</span>
<b class="hsep" style="left:599.5px"></b><span class="rd" style="left:604.5px;letter-spacing:-0.200px;transform:scaleX(0.9456)">[B9] Z_Horizon Catboy.esp</span>
<b class="hsep" style="left:749.5px"></b><span class="or" style="left:754.5px;letter-spacing:-0.200px;transform:scaleX(0.9267)">[FE 085] M8r Complex Sorter.esp</span>
<b class="hsep" style="left:899.5px"></b>
</div>
<div class="rr" style="top:17px;background:#d9ffd9"><i class="box" style="left:9.2px;top:3.6px"></i><i class="hdot" style="left:18px;width:4px;top:7px"></i><span class="pu" style="left:24px;letter-spacing:-0.200px;transform:scaleX(0.9362)">Record Header</span><b class="cb" style="left:600px;width:150px;background:#cbfbcb"></b></div>
<div class="rr" style="top:32px;background:#d9ffd9"><i class="hdot" style="left:28px;width:9px;top:7px"></i><span class="pu" style="left:39px;letter-spacing:-0.200px;transform:scaleX(0.9545)">Signature</span><span class="pu" style="left:159px;letter-spacing:-0.200px;transform:scaleX(0.9071)">ALCH</span><span class="gy" style="left:309px;letter-spacing:-0.200px;transform:scaleX(0.9071)">ALCH</span><span class="gy" style="left:459px;letter-spacing:-0.200px;transform:scaleX(0.9071)">ALCH</span><b class="cb" style="left:600px;width:150px;background:#cbfbcb"></b><span class="gy" style="left:609px;letter-spacing:-0.200px;transform:scaleX(0.9071)">ALCH</span><span class="gy" style="left:759px;letter-spacing:-0.200px;transform:scaleX(0.9071)">ALCH</span></div>
<div class="rr" style="top:47px;background:#d9ffd9"><i class="hdot" style="left:28px;width:9px;top:7px"></i><span class="bk" style="left:39px;letter-spacing:-0.200px;transform:scaleX(0.8853)">Data Size</span><span class="bk" style="left:159px;letter-spacing:-0.200px;transform:scaleX(0.8759)">222</span><span class="bk" style="left:309px;letter-spacing:-0.200px;transform:scaleX(0.8759)">284</span><span class="bk" style="left:459px;letter-spacing:-0.200px;transform:scaleX(0.8759)">302</span><b class="cb" style="left:600px;width:150px;background:#cbfbcb"></b><span class="bk" style="left:609px;letter-spacing:-0.200px;transform:scaleX(0.8759)">275</span><span class="bk" style="left:759px;letter-spacing:-0.200px;transform:scaleX(0.8759)">303</span></div>
<div class="rr" style="top:62px;background:#d9ffd9"><i class="box" style="left:24.2px;top:3.6px"></i><i class="hdot" style="left:33px;width:4px;top:7px"></i><span class="pu" style="left:39px;letter-spacing:-0.200px;transform:scaleX(0.9394)">Record Flags (sorted)</span><span class="pu" style="left:159px;letter-spacing:-0.200px">Medicine</span><span class="gy" style="left:309px;letter-spacing:-0.200px">Medicine</span><span class="gy" style="left:459px;letter-spacing:-0.200px">Medicine</span><b class="cb" style="left:600px;width:150px;background:#cbfbcb"></b><span class="gy" style="left:609px;letter-spacing:-0.200px">Medicine</span><span class="gy" style="left:759px;letter-spacing:-0.200px">Medicine</span></div>
<div class="rr" style="top:77px;background:#d9ffd9"><i class="hdot" style="left:43px;width:9px;top:7px"></i><span class="pu" style="left:54px;letter-spacing:-0.200px">Medicine</span><span class="pu" style="left:159px;letter-spacing:-0.200px">Medicine</span><span class="gy" style="left:309px;letter-spacing:-0.200px">Medicine</span><span class="gy" style="left:459px;letter-spacing:-0.200px">Medicine</span><b class="cb" style="left:600px;width:150px;background:#cbfbcb"></b><span class="gy" style="left:609px;letter-spacing:-0.200px">Medicine</span><span class="gy" style="left:759px;letter-spacing:-0.200px">Medicine</span></div>
<div class="rr" style="top:92px;background:#d9ffd9"><i class="hdot" style="left:28px;width:9px;top:7px"></i><span class="pu" style="left:39px;letter-spacing:-0.200px;transform:scaleX(0.9254)">FormID</span><span class="pu" style="left:159px;letter-spacing:-0.200px;transform:scaleX(0.9913)">HC_Antibiotics "Антибиотики" [...</span><span class="gy" style="left:309px;letter-spacing:-0.200px;transform:scaleX(0.9913)">HC_Antibiotics "Антибиотики" [...</span><span class="gy" style="left:459px;letter-spacing:-0.200px;transform:scaleX(0.9778)">HC_Antibiotics "(-X) Антибиоти...</span><b class="cb" style="left:600px;width:150px;background:#cbfbcb"></b><span class="gy" style="left:609px;letter-spacing:-0.200px;transform:scaleX(0.9682)">HC_Antibiotics "Панацея-X" [AL...</span><span class="gy" style="left:759px;letter-spacing:-0.200px;transform:scaleX(0.9879)">HC_Antibiotics "[Aid] Антибиот...</span></div>
<div class="rr" style="top:107px;background:#d9ffd9"><i class="hdot" style="left:28px;width:9px;top:7px"></i><span class="bk" style="left:39px;letter-spacing:-0.200px;transform:scaleX(0.9667)">Version Control Info 1</span><span class="bk" style="left:159px;letter-spacing:-0.200px;transform:scaleX(0.9181)">2019-11-25 User: 42 Index: 0</span><span class="bk" style="left:309px;letter-spacing:-0.200px;transform:scaleX(0.9200)">2017-10-21 User: 0 Index: 0</span><span class="bk" style="left:459px;letter-spacing:-0.200px;transform:scaleX(0.9822)">None</span><b class="cb" style="left:600px;width:150px;background:#cbfbcb"></b><span class="bk" style="left:609px;letter-spacing:-0.200px;transform:scaleX(0.9822)">None</span><span class="bk" style="left:759px;letter-spacing:-0.200px;transform:scaleX(0.9822)">None</span></div>
<div class="rr" style="top:122px;background:#d9ffd9"><i class="hdot" style="left:28px;width:9px;top:7px"></i><span class="bk" style="left:39px;letter-spacing:-0.200px;transform:scaleX(0.9373)">Form Version</span><span class="bk" style="left:159px;letter-spacing:-0.200px;transform:scaleX(0.8759)">131</span><span class="bk" style="left:309px;letter-spacing:-0.200px;transform:scaleX(0.8759)">131</span><span class="bk" style="left:459px;letter-spacing:-0.200px;transform:scaleX(0.8759)">131</span><b class="cb" style="left:600px;width:150px;background:#cbfbcb"></b><span class="bk" style="left:609px;letter-spacing:-0.200px;transform:scaleX(0.8759)">131</span><span class="bk" style="left:759px;letter-spacing:-0.200px;transform:scaleX(0.8759)">131</span></div>
<div class="rr gl" style="top:137px;background:#d9ffd9"><i class="hdot" style="left:28px;width:9px;top:7px"></i><span class="bk" style="left:39px;letter-spacing:-0.200px;transform:scaleX(0.9667)">Version Control Info 2</span><span class="bk" style="left:159px;letter-spacing:-0.200px;transform:scaleX(0.8719)">0B 00</span><span class="bk" style="left:309px;letter-spacing:-0.200px;transform:scaleX(0.8797)">00 00</span><span class="bk" style="left:459px;letter-spacing:-0.200px;transform:scaleX(0.8797)">00 00</span><b class="cb" style="left:600px;width:150px;background:#cbfbcb"></b><span class="bk" style="left:609px;letter-spacing:-0.200px;transform:scaleX(0.8797)">00 00</span><span class="bk" style="left:759px;letter-spacing:-0.200px;transform:scaleX(0.8797)">00 00</span></div>
<div class="rr gl" style="top:152px;background:#d9ffd9"><i class="hdot" style="left:13px;width:9px;top:7px"></i><span class="pu" style="left:24px;letter-spacing:-0.200px;transform:scaleX(0.9259)">EDID - Editor ID</span><span class="pu" style="left:159px;letter-spacing:-0.200px;transform:scaleX(0.9726)">HC_Antibiotics</span><span class="gy" style="left:309px;letter-spacing:-0.200px;transform:scaleX(0.9726)">HC_Antibiotics</span><span class="gy" style="left:459px;letter-spacing:-0.200px;transform:scaleX(0.9726)">HC_Antibiotics</span><b class="cb" style="left:600px;width:150px;background:#cbfbcb"></b><span class="gy" style="left:609px;letter-spacing:-0.200px;transform:scaleX(0.9726)">HC_Antibiotics</span><span class="gy" style="left:759px;letter-spacing:-0.200px;transform:scaleX(0.9726)">HC_Antibiotics</span></div>
<div class="rr" style="top:167px;background:#d9ffd9"><i class="box" style="left:9.2px;top:3.6px"></i><i class="hdot" style="left:18px;width:4px;top:7px"></i><span class="pu" style="left:24px;letter-spacing:-0.200px;transform:scaleX(0.9608)">OBND - Object Bounds</span><b class="cb" style="left:600px;width:150px;background:#cbfbcb"></b></div>
<div class="rr" style="top:182px;background:#d9ffd9"><i class="hdot" style="left:28px;width:9px;top:7px"></i><span class="pu" style="left:39px;letter-spacing:-0.200px;transform:scaleX(0.8597)">X1</span><span class="pu" style="left:159px;letter-spacing:-0.142px">-6</span><span class="gy" style="left:309px;letter-spacing:-0.142px">-6</span><span class="gy" style="left:459px;letter-spacing:-0.142px">-6</span><b class="cb" style="left:600px;width:150px;background:#cbfbcb"></b><span class="gy" style="left:609px;letter-spacing:-0.142px">-6</span><span class="gy" style="left:759px;letter-spacing:-0.142px">-6</span></div>
<div class="rr" style="top:197px;background:#d9ffd9"><i class="hdot" style="left:28px;width:9px;top:7px"></i><span class="pu" style="left:39px;letter-spacing:-0.200px;transform:scaleX(0.8597)">Y1</span><span class="pu" style="left:159px;letter-spacing:-0.200px;transform:scaleX(0.9607)">-14</span><span class="gy" style="left:309px;letter-spacing:-0.200px;transform:scaleX(0.9607)">-14</span><span class="gy" style="left:459px;letter-spacing:-0.200px;transform:scaleX(0.9607)">-14</span><b class="cb" style="left:600px;width:150px;background:#cbfbcb"></b><span class="gy" style="left:609px;letter-spacing:-0.200px;transform:scaleX(0.9607)">-14</span><span class="gy" style="left:759px;letter-spacing:-0.200px;transform:scaleX(0.9607)">-14</span></div>
<div class="rr" style="top:212px;background:#d9ffd9"><i class="hdot" style="left:28px;width:9px;top:7px"></i><span class="pu" style="left:39px;letter-spacing:-0.200px;transform:scaleX(0.9025)">Z1</span><span class="pu" style="left:159px;letter-spacing:-0.200px;transform:scaleX(0.8759)">0</span><span class="gy" style="left:309px;letter-spacing:-0.200px;transform:scaleX(0.8759)">0</span><span class="gy" style="left:459px;letter-spacing:-0.200px;transform:scaleX(0.8759)">0</span><b class="cb" style="left:600px;width:150px;background:#cbfbcb"></b><span class="gy" style="left:609px;letter-spacing:-0.200px;transform:scaleX(0.8759)">0</span><span class="gy" style="left:759px;letter-spacing:-0.200px;transform:scaleX(0.8759)">0</span></div>
<div class="rr" style="top:227px;background:#d9ffd9"><i class="hdot" style="left:28px;width:9px;top:7px"></i><span class="pu" style="left:39px;letter-spacing:-0.200px;transform:scaleX(0.8597)">X2</span><span class="pu" style="left:159px;letter-spacing:-0.200px;transform:scaleX(0.8759)">6</span><span class="gy" style="left:309px;letter-spacing:-0.200px;transform:scaleX(0.8759)">6</span><span class="gy" style="left:459px;letter-spacing:-0.200px;transform:scaleX(0.8759)">6</span><b class="cb" style="left:600px;width:150px;background:#cbfbcb"></b><span class="gy" style="left:609px;letter-spacing:-0.200px;transform:scaleX(0.8759)">6</span><span class="gy" style="left:759px;letter-spacing:-0.200px;transform:scaleX(0.8759)">6</span></div>
<div class="rr" style="top:242px;background:#d9ffd9"><i class="hdot" style="left:28px;width:9px;top:7px"></i><span class="pu" style="left:39px;letter-spacing:-0.200px;transform:scaleX(0.8597)">Y2</span><span class="pu" style="left:159px;letter-spacing:-0.200px;transform:scaleX(0.8759)">14</span><span class="gy" style="left:309px;letter-spacing:-0.200px;transform:scaleX(0.8759)">14</span><span class="gy" style="left:459px;letter-spacing:-0.200px;transform:scaleX(0.8759)">14</span><b class="cb" style="left:600px;width:150px;background:#cbfbcb"></b><span class="gy" style="left:609px;letter-spacing:-0.200px;transform:scaleX(0.8759)">14</span><span class="gy" style="left:759px;letter-spacing:-0.200px;transform:scaleX(0.8759)">14</span></div>
<div class="rr gl" style="top:257px;background:#d9ffd9"><i class="hdot" style="left:28px;width:9px;top:7px"></i><span class="pu" style="left:39px;letter-spacing:-0.200px;transform:scaleX(0.9025)">Z2</span><span class="pu" style="left:159px;letter-spacing:-0.200px;transform:scaleX(0.8759)">5</span><span class="gy" style="left:309px;letter-spacing:-0.200px;transform:scaleX(0.8759)">5</span><span class="gy" style="left:459px;letter-spacing:-0.200px;transform:scaleX(0.8759)">5</span><b class="cb" style="left:600px;width:150px;background:#cbfbcb"></b><span class="gy" style="left:609px;letter-spacing:-0.200px;transform:scaleX(0.8759)">5</span><span class="gy" style="left:759px;letter-spacing:-0.200px;transform:scaleX(0.8759)">5</span></div>
<div class="rr gl" style="top:272px;background:#d9ffd9"><i class="hdot" style="left:13px;width:9px;top:7px"></i><span class="pu" style="left:24px;letter-spacing:-0.200px;transform:scaleX(0.9306)">PTRN - Preview Transform</span><span class="pu" style="left:159px;letter-spacing:-0.200px;transform:scaleX(0.9178)">FoodInjector [TRNS:00248D5E]</span><span class="gy" style="left:309px;letter-spacing:-0.200px;transform:scaleX(0.9178)">FoodInjector [TRNS:00248D5E]</span><span class="gy" style="left:459px;letter-spacing:-0.200px;transform:scaleX(0.9178)">FoodInjector [TRNS:00248D5E]</span><b class="cb" style="left:600px;width:150px;background:#cbfbcb"></b><span class="gy" style="left:609px;letter-spacing:-0.200px;transform:scaleX(0.9178)">FoodInjector [TRNS:00248D5E]</span><span class="gy" style="left:759px;letter-spacing:-0.200px;transform:scaleX(0.9178)">FoodInjector [TRNS:00248D5E]</span></div>
<div class="rr gl" style="top:287px;background:#ffd9d9"><i class="hdot" style="left:13px;width:9px;top:7px"></i><span class="rd" style="left:24px;letter-spacing:-0.200px;transform:scaleX(0.9204)">FULL - Name</span><span class="pu" style="left:159px;letter-spacing:-0.200px">Антибиотики</span><span class="gy" style="left:309px;letter-spacing:-0.200px">Антибиотики</span><span class="rd" style="left:459px;letter-spacing:-0.200px;transform:scaleX(0.9936)">(-X) Антибиотики</span><b class="cb" style="left:600px;width:150px;background:#ffcdcd"></b><span class="rd" style="left:609px;letter-spacing:-0.200px;transform:scaleX(0.9472)">Панацея-X</span><span class="or" style="left:759px;letter-spacing:-0.140px">[Aid] Антибиотики</span></div>
<div class="rr gl" style="top:302px;background:#f3ffe0"><i class="hdot" style="left:13px;width:9px;top:7px"></i><span class="bk" style="left:24px;letter-spacing:-0.200px;transform:scaleX(0.9426)">KSIZ - Keyword Count</span><span class="pu" style="left:159px;letter-spacing:-0.200px;transform:scaleX(0.8759)">1</span><span class="gy" style="left:309px;letter-spacing:-0.200px;transform:scaleX(0.8759)">1</span><span class="bk" style="left:459px;letter-spacing:-0.200px;transform:scaleX(0.8759)">2</span><b class="cb" style="left:600px;width:150px;background:#ecffd4"></b><span class="bk" style="left:609px;letter-spacing:-0.200px;transform:scaleX(0.8759)">2</span><span class="bk" style="left:759px;letter-spacing:-0.200px;transform:scaleX(0.8759)">2</span></div>
<div class="rr" style="top:317px;background:#ffd9d9"><i class="box" style="left:9.2px;top:3.6px"></i><i class="hdot" style="left:18px;width:4px;top:7px"></i><span class="rd" style="left:24px;letter-spacing:-0.200px;transform:scaleX(0.9509)">KWDA - Keywords (sorted)</span><b class="cb" style="left:600px;width:150px;background:#ffcdcd"></b></div>
<div class="rr" style="top:332px;background:#ffd9d9"><i class="hdot" style="left:28px;width:9px;top:7px"></i><span class="rd" style="left:39px;letter-spacing:-0.200px;transform:scaleX(0.9598)">Keyword</span><span class="pu" style="left:159px;letter-spacing:-0.200px;transform:scaleX(0.9176)">ObjectTypeChem [KYWD:000F4A...</span><b class="cb" style="left:300px;width:150px;background:#ffecec"></b><span class="gy" style="left:459px;letter-spacing:-0.200px;transform:scaleX(0.9176)">ObjectTypeChem [KYWD:000F4A...</span><b class="cb" style="left:600px;width:150px;background:#ffcdcd"></b><span class="gy" style="left:609px;letter-spacing:-0.200px;transform:scaleX(0.9176)">ObjectTypeChem [KYWD:000F4A...</span><span class="ol" style="left:759px;letter-spacing:-0.200px;transform:scaleX(0.9176)">ObjectTypeChem [KYWD:000F4A...</span></div>
<div class="rr" style="top:347px;background:#ffd9d9"><i class="hdot" style="left:28px;width:9px;top:7px"></i><span class="rd" style="left:39px;letter-spacing:-0.200px;transform:scaleX(0.9598)">Keyword</span><b class="cb" style="left:150px;width:150px;background:#ffecec"></b><span class="rd" style="left:309px;letter-spacing:-0.200px;transform:scaleX(0.9255)">ObjectTypeStimpak [KYWD:000F...</span><b class="cb" style="left:450px;width:150px;background:#ffecec"></b><b class="cb" style="left:600px;width:150px;background:#ffe4e4"></b><b class="cb" style="left:750px;width:150px;background:#ffecec"></b><b class="cb" style="left:900px;width:80px;background:#ffecec"></b></div>
<div class="rr gl" style="top:362px;background:#ffffd9"><i class="hdot" style="left:28px;width:9px;top:7px"></i><span class="gn" style="left:39px;letter-spacing:-0.200px;transform:scaleX(0.9598)">Keyword</span><b class="cb" style="left:150px;width:150px;background:#ffffec"></b><b class="cb" style="left:300px;width:150px;background:#ffffec"></b><span class="gn" style="left:459px;letter-spacing:-0.200px;transform:scaleX(0.9068)">ObjectTypeCure [KYWD:0C002C...</span><b class="cb" style="left:600px;width:150px;background:#ffffce"></b><span class="gn" style="left:609px;letter-spacing:-0.200px;transform:scaleX(0.9068)">ObjectTypeCure [KYWD:0C002C...</span><span class="gn" style="left:759px;letter-spacing:-0.200px;transform:scaleX(0.9068)">ObjectTypeCure [KYWD:0C002C...</span></div>
<div class="rr" style="top:377px;background:#d9ffd9"><i class="box" style="left:9.2px;top:3.6px"></i><i class="hdot" style="left:18px;width:4px;top:7px"></i><span class="pu" style="left:24px;letter-spacing:-0.128px">Model</span><b class="cb" style="left:600px;width:150px;background:#cbfbcb"></b></div>
<div class="rr" style="top:392px;background:#d9ffd9"><i class="hdot" style="left:28px;width:9px;top:7px"></i><span class="pu" style="left:39px;letter-spacing:-0.200px;transform:scaleX(0.9637)">MODL - Model FileName</span><span class="pu" style="left:159px;letter-spacing:-0.200px;transform:scaleX(0.9807)">Props\Pyscho.nif</span><span class="gy" style="left:309px;letter-spacing:-0.200px;transform:scaleX(0.9807)">Props\Pyscho.nif</span><span class="gy" style="left:459px;letter-spacing:-0.200px;transform:scaleX(0.9807)">Props\Pyscho.nif</span><b class="cb" style="left:600px;width:150px;background:#cbfbcb"></b><span class="gy" style="left:609px;letter-spacing:-0.200px;transform:scaleX(0.9807)">Props\Pyscho.nif</span><span class="gy" style="left:759px;letter-spacing:-0.200px;transform:scaleX(0.9807)">Props\Pyscho.nif</span></div>
<div class="rr" style="top:407px;background:#d9ffd9"><i class="hdot" style="left:28px;width:9px;top:7px"></i><span class="lg" style="left:39px;letter-spacing:-0.200px;transform:scaleX(0.9441)">MODC - Color Remappin...</span><b class="cb" style="left:150px;width:150px;background:#ecffec"></b><b class="cb" style="left:300px;width:150px;background:#ecffec"></b><b class="cb" style="left:450px;width:150px;background:#ecffec"></b><b class="cb" style="left:600px;width:150px;background:#e5ffe5"></b><b class="cb" style="left:750px;width:150px;background:#ecffec"></b><b class="cb" style="left:900px;width:80px;background:#ecffec"></b></div>
<div class="rr" style="top:422px;background:#d9ffd9"><i class="hdot" style="left:28px;width:9px;top:7px"></i><span class="lg" style="left:39px;letter-spacing:-0.200px;transform:scaleX(0.9480)">MODS - Material Swap</span><b class="cb" style="left:150px;width:150px;background:#ecffec"></b><b class="cb" style="left:300px;width:150px;background:#ecffec"></b><b class="cb" style="left:450px;width:150px;background:#ecffec"></b><b class="cb" style="left:600px;width:150px;background:#e5ffe5"></b><b class="cb" style="left:750px;width:150px;background:#ecffec"></b><b class="cb" style="left:900px;width:80px;background:#ecffec"></b></div>
<div class="rr gl" style="top:437px;background:#d9ffd9"><i class="hdot" style="left:28px;width:9px;top:7px"></i><span class="lg" style="left:39px;letter-spacing:-0.200px;transform:scaleX(0.9728)">MODF - Unknown</span><b class="cb" style="left:150px;width:150px;background:#ecffec"></b><b class="cb" style="left:300px;width:150px;background:#ecffec"></b><b class="cb" style="left:450px;width:150px;background:#ecffec"></b><b class="cb" style="left:600px;width:150px;background:#e5ffe5"></b><b class="cb" style="left:750px;width:150px;background:#ecffec"></b><b class="cb" style="left:900px;width:80px;background:#ecffec"></b></div>
<div class="rr gl" style="top:452px;background:#d9ffd9"><i class="hdot" style="left:13px;width:9px;top:7px"></i><span class="lg" style="left:24px;letter-spacing:-0.200px;transform:scaleX(0.9591)">ICON - Inventory Image</span><b class="cb" style="left:150px;width:150px;background:#ecffec"></b><b class="cb" style="left:300px;width:150px;background:#ecffec"></b><b class="cb" style="left:450px;width:150px;background:#ecffec"></b><b class="cb" style="left:600px;width:150px;background:#e5ffe5"></b><b class="cb" style="left:750px;width:150px;background:#ecffec"></b><b class="cb" style="left:900px;width:80px;background:#ecffec"></b></div>
<div class="rr gl" style="top:467px;background:#d9ffd9"><i class="hdot" style="left:13px;width:9px;top:7px"></i><span class="lg" style="left:24px;letter-spacing:-0.200px;transform:scaleX(0.9463)">MICO - Message Icon</span><b class="cb" style="left:150px;width:150px;background:#ecffec"></b><b class="cb" style="left:300px;width:150px;background:#ecffec"></b><b class="cb" style="left:450px;width:150px;background:#ecffec"></b><b class="cb" style="left:600px;width:150px;background:#e5ffe5"></b><b class="cb" style="left:750px;width:150px;background:#ecffec"></b><b class="cb" style="left:900px;width:80px;background:#ecffec"></b></div>
<div class="rr gl" style="top:482px;background:#ffd9d9"><i class="hdot" style="left:13px;width:9px;top:7px"></i><span class="rd" style="left:24px;letter-spacing:-0.200px;transform:scaleX(0.9706)">YNAM - Sound - Pick Up</span><span class="pu" style="left:159px;letter-spacing:-0.200px;transform:scaleX(0.8947)">ITMChemsJetUp [SNDR:00249C45]</span><span class="rd" style="left:309px;letter-spacing:-0.200px;transform:scaleX(0.9126)">ITMChemsStimpakUp [SNDR:002...</span><span class="gy" style="left:459px;letter-spacing:-0.200px;transform:scaleX(0.8947)">ITMChemsJetUp [SNDR:00249C45]</span><b class="cb" style="left:600px;width:150px;background:#ffcdcd"></b><span class="gy" style="left:609px;letter-spacing:-0.200px;transform:scaleX(0.8947)">ITMChemsJetUp [SNDR:00249C45]</span><span class="ol" style="left:759px;letter-spacing:-0.200px;transform:scaleX(0.8947)">ITMChemsJetUp [SNDR:00249C45]</span></div>
<div class="rr gl" style="top:497px;background:#d9ffd9"><i class="hdot" style="left:13px;width:9px;top:7px"></i><span class="lg" style="left:24px;letter-spacing:-0.200px;transform:scaleX(0.9836)">ZNAM - Sound - Put Down</span><b class="cb" style="left:150px;width:150px;background:#ecffec"></b><b class="cb" style="left:300px;width:150px;background:#ecffec"></b><b class="cb" style="left:450px;width:150px;background:#ecffec"></b><b class="cb" style="left:600px;width:150px;background:#e5ffe5"></b><b class="cb" style="left:750px;width:150px;background:#ecffec"></b><b class="cb" style="left:900px;width:80px;background:#ecffec"></b></div>
<div class="rr gl" style="top:512px;background:#d9ffd9"><i class="hdot" style="left:13px;width:9px;top:7px"></i><span class="lg" style="left:24px;letter-spacing:-0.200px;transform:scaleX(0.9214)">ETYP - Equipment Type</span><b class="cb" style="left:150px;width:150px;background:#ecffec"></b><b class="cb" style="left:300px;width:150px;background:#ecffec"></b><b class="cb" style="left:450px;width:150px;background:#ecffec"></b><b class="cb" style="left:600px;width:150px;background:#e5ffe5"></b><b class="cb" style="left:750px;width:150px;background:#ecffec"></b><b class="cb" style="left:900px;width:80px;background:#ecffec"></b></div>
<div class="rr gl" style="top:527px;background:#d9ffd9"><i class="hdot" style="left:13px;width:9px;top:7px"></i><span class="lg" style="left:24px;letter-spacing:-0.200px;transform:scaleX(0.9428)">CUSD - Sound - Crafting</span><b class="cb" style="left:150px;width:150px;background:#ecffec"></b><b class="cb" style="left:300px;width:150px;background:#ecffec"></b><b class="cb" style="left:450px;width:150px;background:#ecffec"></b><b class="cb" style="left:600px;width:150px;background:#e5ffe5"></b><b class="cb" style="left:750px;width:150px;background:#ecffec"></b><b class="cb" style="left:900px;width:80px;background:#ecffec"></b></div>
<div class="rr gl" style="top:542px;background:#d9ffd9"><i class="hdot" style="left:13px;width:9px;top:7px"></i><span class="lg" style="left:24px;letter-spacing:-0.200px;transform:scaleX(0.9787)">Destructible</span><b class="cb" style="left:150px;width:150px;background:#ecffec"></b><b class="cb" style="left:300px;width:150px;background:#ecffec"></b><b class="cb" style="left:450px;width:150px;background:#ecffec"></b><b class="cb" style="left:600px;width:150px;background:#e5ffe5"></b><b class="cb" style="left:750px;width:150px;background:#ecffec"></b><b class="cb" style="left:900px;width:80px;background:#ecffec"></b></div>
<div class="rr gl" style="top:557px;background:#ffd9d9"><i class="hdot" style="left:13px;width:9px;top:7px"></i><span class="rd" style="left:24px;letter-spacing:-0.200px;transform:scaleX(0.9232)">DESC - Description</span><span class="pu" style="left:159px;letter-spacing:-0.200px;transform:scaleX(0.9378)">Излечивает от заболевания.</span><span class="gy" style="left:309px;letter-spacing:-0.200px;transform:scaleX(0.9378)">Излечивает от заболевания.</span><span class="or" style="left:459px;letter-spacing:-0.200px;transform:scaleX(0.9375)">Излечивает от всех заболевани...</span><b class="cb" style="left:600px;width:150px;background:#ffcdcd"></b><span class="rd" style="left:609px;letter-spacing:-0.200px;transform:scaleX(0.9387)">Лечит все заболевания.</span><span class="or" style="left:759px;letter-spacing:-0.200px;transform:scaleX(0.9375)">Излечивает от всех заболевани...</span></div>
<div class="rr gl" style="top:572px;background:#ffd9d9"><i class="hdot" style="left:13px;width:9px;top:7px"></i><span class="rd" style="left:24px;letter-spacing:-0.200px;transform:scaleX(0.9648)">DATA - Weight</span><span class="pu" style="left:159px;letter-spacing:-0.200px;transform:scaleX(0.8782)">0.100000</span><span class="gy" style="left:309px;letter-spacing:-0.200px;transform:scaleX(0.8782)">0.100000</span><span class="rd" style="left:459px;letter-spacing:-0.200px;transform:scaleX(0.8782)">0.200000</span><b class="cb" style="left:600px;width:150px;background:#ffcdcd"></b><span class="rd" style="left:609px;letter-spacing:-0.200px;transform:scaleX(0.8782)">0.200000</span><span class="or" style="left:759px;letter-spacing:-0.200px;transform:scaleX(0.8782)">0.000000</span></div>
<div class="rr" style="top:587px;background:#ffffd9"><i class="box" style="left:9.2px;top:3.6px"></i><i class="hdot" style="left:18px;width:4px;top:7px"></i><span class="gn" style="left:24px;letter-spacing:-0.200px;transform:scaleX(0.9287)">ENIT - Effect Data</span><b class="cb" style="left:600px;width:150px;background:#ffffce"></b></div>
<div class="rr" style="top:602px;background:#ffffd9"><i class="hdot" style="left:28px;width:9px;top:7px"></i><span class="gn" style="left:39px;letter-spacing:-0.200px;transform:scaleX(0.9237)">Value</span><span class="pu" style="left:159px;letter-spacing:-0.200px;transform:scaleX(0.8759)">75</span><span class="gy" style="left:309px;letter-spacing:-0.200px;transform:scaleX(0.8759)">75</span><span class="gn" style="left:459px;letter-spacing:-0.200px;transform:scaleX(0.8759)">350</span><b class="cb" style="left:600px;width:150px;background:#ffffce"></b><span class="gn" style="left:609px;letter-spacing:-0.200px;transform:scaleX(0.8759)">350</span><span class="gn" style="left:759px;letter-spacing:-0.200px;transform:scaleX(0.8759)">350</span></div>
<div class="rr" style="top:617px;background:#d9ffd9"><i class="box" style="left:24.2px;top:3.6px"></i><i class="hdot" style="left:33px;width:4px;top:7px"></i><span class="pu" style="left:39px;letter-spacing:-0.200px;transform:scaleX(0.9439)">Flags (sorted)</span><span class="pu" style="left:159px;letter-spacing:-0.200px;transform:scaleX(0.9878)">No Auto-Calc, Medicine</span><span class="gy" style="left:309px;letter-spacing:-0.200px;transform:scaleX(0.9878)">No Auto-Calc, Medicine</span><span class="gy" style="left:459px;letter-spacing:-0.200px;transform:scaleX(0.9878)">No Auto-Calc, Medicine</span><b class="cb" style="left:600px;width:150px;background:#cbfbcb"></b><span class="gy" style="left:609px;letter-spacing:-0.200px;transform:scaleX(0.9878)">No Auto-Calc, Medicine</span><span class="gy" style="left:759px;letter-spacing:-0.200px;transform:scaleX(0.9878)">No Auto-Calc, Medicine</span></div>
<div class="rr" style="top:632px;background:#d9ffd9"><i class="hdot" style="left:43px;width:9px;top:7px"></i><span class="pu" style="left:54px;letter-spacing:-0.200px;transform:scaleX(0.9875)">No Auto-Calc</span><span class="pu" style="left:159px;letter-spacing:-0.200px;transform:scaleX(0.9875)">No Auto-Calc</span><span class="gy" style="left:309px;letter-spacing:-0.200px;transform:scaleX(0.9875)">No Auto-Calc</span><span class="gy" style="left:459px;letter-spacing:-0.200px;transform:scaleX(0.9875)">No Auto-Calc</span><b class="cb" style="left:600px;width:150px;background:#cbfbcb"></b><span class="gy" style="left:609px;letter-spacing:-0.200px;transform:scaleX(0.9875)">No Auto-Calc</span><span class="gy" style="left:759px;letter-spacing:-0.200px;transform:scaleX(0.9875)">No Auto-Calc</span></div>
<div class="rr" style="top:647px;background:#d9ffd9"><i class="hdot" style="left:43px;width:9px;top:7px"></i><span class="pu" style="left:54px;letter-spacing:-0.200px">Medicine</span><span class="pu" style="left:159px;letter-spacing:-0.200px">Medicine</span><span class="gy" style="left:309px;letter-spacing:-0.200px">Medicine</span><span class="gy" style="left:459px;letter-spacing:-0.200px">Medicine</span><b class="cb" style="left:600px;width:150px;background:#cbfbcb"></b><span class="gy" style="left:609px;letter-spacing:-0.200px">Medicine</span><span class="gy" style="left:759px;letter-spacing:-0.200px">Medicine</span></div>
<div class="rr" style="top:662px;background:#d9ffd9"><i class="hdot" style="left:28px;width:9px;top:7px"></i><span class="pu" style="left:39px;letter-spacing:-0.054px">Addiction</span><span class="pu" style="left:159px;letter-spacing:-0.200px;transform:scaleX(0.9371)">NULL - Null Reference [00000000]</span><span class="gy" style="left:309px;letter-spacing:-0.200px;transform:scaleX(0.9371)">NULL - Null Reference [00000000]</span><span class="gy" style="left:459px;letter-spacing:-0.200px;transform:scaleX(0.9371)">NULL - Null Reference [00000000]</span><b class="cb" style="left:600px;width:150px;background:#cbfbcb"></b><span class="gy" style="left:609px;letter-spacing:-0.200px;transform:scaleX(0.9371)">NULL - Null Reference [00000000]</span><span class="gy" style="left:759px;letter-spacing:-0.200px;transform:scaleX(0.9371)">NULL - Null Reference [00000000]</span></div>
<div class="rr" style="top:677px;background:#d9ffd9"><i class="hdot" style="left:28px;width:9px;top:7px"></i><span class="pu" style="left:39px;letter-spacing:-0.200px;transform:scaleX(0.9787)">Addiction Chance</span><span class="pu" style="left:159px;letter-spacing:-0.200px;transform:scaleX(0.8782)">0.000000</span><span class="gy" style="left:309px;letter-spacing:-0.200px;transform:scaleX(0.8782)">0.000000</span><span class="gy" style="left:459px;letter-spacing:-0.200px;transform:scaleX(0.8782)">0.000000</span><b class="cb" style="left:600px;width:150px;background:#cbfbcb"></b><span class="gy" style="left:609px;letter-spacing:-0.200px;transform:scaleX(0.8782)">0.000000</span><span class="gy" style="left:759px;letter-spacing:-0.200px;transform:scaleX(0.8782)">0.000000</span></div>
<div class="rr gl" style="top:692px;background:#d9ffd9"><i class="hdot" style="left:28px;width:9px;top:7px"></i><span class="pu" style="left:39px;letter-spacing:-0.200px;transform:scaleX(0.9480)">Sound - Consume</span><span class="pu" style="left:159px;letter-spacing:-0.200px;transform:scaleX(0.9268)">NPCHumanChemsStimpak [SN...</span><span class="gy" style="left:309px;letter-spacing:-0.200px;transform:scaleX(0.9268)">NPCHumanChemsStimpak [SN...</span><span class="gy" style="left:459px;letter-spacing:-0.200px;transform:scaleX(0.9268)">NPCHumanChemsStimpak [SN...</span><b class="cb" style="left:600px;width:150px;background:#cbfbcb"></b><span class="gy" style="left:609px;letter-spacing:-0.200px;transform:scaleX(0.9268)">NPCHumanChemsStimpak [SN...</span><span class="gy" style="left:759px;letter-spacing:-0.200px;transform:scaleX(0.9268)">NPCHumanChemsStimpak [SN...</span></div>
<div class="rr gl" style="top:707px;background:#d9ffd9"><i class="hdot" style="left:13px;width:9px;top:7px"></i><span class="pu" style="left:24px;letter-spacing:-0.200px;transform:scaleX(0.9940)">DNAM - Addiction Name</span><b class="cb" style="left:600px;width:150px;background:#cbfbcb"></b></div>
<div class="rr" style="top:722px;background:#d9ffd9"><i class="box" style="left:9.2px;top:3.6px"></i><i class="hdot" style="left:18px;width:4px;top:7px"></i><span class="pu" style="left:24px;letter-spacing:-0.200px;transform:scaleX(0.9393)">Effects</span><b class="cb" style="left:600px;width:150px;background:#cbfbcb"></b></div>
<div class="rr" style="top:737px;background:#d9ffd9"><i class="box" style="left:24.2px;top:3.6px"></i><i class="hdot" style="left:33px;width:4px;top:7px"></i><span class="pu" style="left:39px;letter-spacing:-0.200px;transform:scaleX(0.9559)">Effect #0</span><b class="cb" style="left:600px;width:150px;background:#cbfbcb"></b></div>
<div class="rr" style="top:752px;background:#d9ffd9"><i class="hdot" style="left:43px;width:9px;top:7px"></i><span class="pu" style="left:54px;letter-spacing:-0.200px;transform:scaleX(0.8992)">EFID - Base Effect</span><span class="pu" style="left:159px;letter-spacing:-0.200px;transform:scaleX(0.9563)">HC_Antiboitics_Effect "Излечив...</span><span class="gy" style="left:309px;letter-spacing:-0.200px;transform:scaleX(0.9563)">HC_Antiboitics_Effect "Излечив...</span><span class="gy" style="left:459px;letter-spacing:-0.200px;transform:scaleX(0.9563)">HC_Antiboitics_Effect "Излечив...</span><b class="cb" style="left:600px;width:150px;background:#cbfbcb"></b><span class="gy" style="left:609px;letter-spacing:-0.200px;transform:scaleX(0.9551)">HC_Antiboitics_Effect "Излечен...</span><span class="gy" style="left:759px;letter-spacing:-0.200px;transform:scaleX(0.9563)">HC_Antiboitics_Effect "Излечив...</span></div>
<div class="rr" style="top:767px;background:#d9ffd9"><i class="box" style="left:39.2px;top:3.6px"></i><i class="hdot" style="left:48px;width:4px;top:7px"></i><span class="pu" style="left:54px;letter-spacing:-0.200px;transform:scaleX(0.8291)">EFIT - EFIT</span><b class="cb" style="left:600px;width:150px;background:#cbfbcb"></b></div>
<div class="rr" style="top:782px;background:#d9ffd9"><i class="hdot" style="left:58px;width:9px;top:7px"></i><span class="pu" style="left:69px;letter-spacing:-0.147px">Magnitude</span><span class="pu" style="left:159px;letter-spacing:-0.200px;transform:scaleX(0.8782)">1.000000</span><span class="gy" style="left:309px;letter-spacing:-0.200px;transform:scaleX(0.8782)">1.000000</span><span class="gy" style="left:459px;letter-spacing:-0.200px;transform:scaleX(0.8782)">1.000000</span><b class="cb" style="left:600px;width:150px;background:#cbfbcb"></b><span class="gy" style="left:609px;letter-spacing:-0.200px;transform:scaleX(0.8782)">1.000000</span><span class="gy" style="left:759px;letter-spacing:-0.200px;transform:scaleX(0.8782)">1.000000</span></div>
<div class="rr" style="top:797px;background:#d9ffd9"><i class="hdot" style="left:58px;width:9px;top:7px"></i><span class="pu" style="left:69px;letter-spacing:-0.200px;transform:scaleX(0.9243)">Area</span><span class="pu" style="left:159px;letter-spacing:-0.200px;transform:scaleX(0.8759)">0</span><span class="gy" style="left:309px;letter-spacing:-0.200px;transform:scaleX(0.8759)">0</span><span class="gy" style="left:459px;letter-spacing:-0.200px;transform:scaleX(0.8759)">0</span><b class="cb" style="left:600px;width:150px;background:#cbfbcb"></b><span class="gy" style="left:609px;letter-spacing:-0.200px;transform:scaleX(0.8759)">0</span><span class="gy" style="left:759px;letter-spacing:-0.200px;transform:scaleX(0.8759)">0</span></div>
<div class="rr" style="top:812px;background:#d9ffd9"><i class="hdot" style="left:58px;width:9px;top:7px"></i><span class="pu" style="left:69px;letter-spacing:-0.200px;transform:scaleX(0.9949)">Duration</span><span class="pu" style="left:159px;letter-spacing:-0.200px;transform:scaleX(0.8759)">0</span><span class="gy" style="left:309px;letter-spacing:-0.200px;transform:scaleX(0.8759)">0</span><span class="gy" style="left:459px;letter-spacing:-0.200px;transform:scaleX(0.8759)">0</span><b class="cb" style="left:600px;width:150px;background:#cbfbcb"></b><span class="gy" style="left:609px;letter-spacing:-0.200px;transform:scaleX(0.8759)">0</span><span class="gy" style="left:759px;letter-spacing:-0.200px;transform:scaleX(0.8759)">0</span></div>
<div class="rr" style="top:827px;background:#d9ffd9"><i class="hdot" style="left:43px;width:9px;top:7px"></i><span class="lg" style="left:54px;letter-spacing:-0.200px;transform:scaleX(0.9862)">Conditions</span><b class="cb" style="left:150px;width:150px;background:#f4fff4"></b><b class="cb" style="left:300px;width:150px;background:#f4fff4"></b><b class="cb" style="left:450px;width:150px;background:#f4fff4"></b><b class="cb" style="left:600px;width:150px;background:#f0fff0"></b><b class="cb" style="left:750px;width:150px;background:#f4fff4"></b><b class="cb" style="left:900px;width:80px;background:#f4fff4"></b></div>
<i class="vsep2" style="left:149.5px;top:17px;height:910px"></i>
<i class="vsep2" style="left:299.5px;top:17px;height:910px"></i>
<i class="vsep2" style="left:449.5px;top:17px;height:910px"></i>
<i class="vsep2" style="left:599.5px;top:17px;height:910px"></i>
<i class="vsep2" style="left:749.5px;top:17px;height:910px"></i>
<i class="vsep2" style="left:899.5px;top:17px;height:910px"></i>
<i class="vdot" style="left:11px;top:29px;height:130px"></i>
<i class="vdot" style="left:11px;top:159px;height:11px"></i>
<i class="vdot" style="left:11px;top:179px;height:100px"></i>
<i class="vdot" style="left:11px;top:279px;height:15px"></i>
<i class="vdot" style="left:11px;top:294px;height:15px"></i>
<i class="vdot" style="left:11px;top:309px;height:11px"></i>
<i class="vdot" style="left:11px;top:329px;height:51px"></i>
<i class="vdot" style="left:11px;top:389px;height:70px"></i>
<i class="vdot" style="left:11px;top:459px;height:15px"></i>
<i class="vdot" style="left:11px;top:474px;height:15px"></i>
<i class="vdot" style="left:11px;top:489px;height:15px"></i>
<i class="vdot" style="left:11px;top:504px;height:15px"></i>
<i class="vdot" style="left:11px;top:519px;height:15px"></i>
<i class="vdot" style="left:11px;top:534px;height:15px"></i>
<i class="vdot" style="left:11px;top:549px;height:15px"></i>
<i class="vdot" style="left:11px;top:564px;height:15px"></i>
<i class="vdot" style="left:11px;top:579px;height:11px"></i>
<i class="vdot" style="left:11px;top:599px;height:115px"></i>
<i class="vdot" style="left:11px;top:714px;height:11px"></i>
<i class="vdot" style="left:11px;top:29px;height:-9px"></i>
<i class="vdot" style="left:11px;top:29px;height:-9px"></i>
<i class="vdot" style="left:26px;top:29px;height:115px"></i>
<i class="vdot" style="left:41px;top:74px;height:10px"></i>
<i class="vdot" style="left:26px;top:179px;height:85px"></i>
<i class="vdot" style="left:26px;top:329px;height:40px"></i>
<i class="vdot" style="left:26px;top:389px;height:55px"></i>
<i class="vdot" style="left:26px;top:599px;height:100px"></i>
<i class="vdot" style="left:41px;top:629px;height:25px"></i>
<i class="vdot" style="left:26px;top:734px;height:6px"></i>
<i class="vdot" style="left:41px;top:749px;height:85px"></i>
<i class="vdot" style="left:56px;top:779px;height:40px"></i>
</div>
<div class="hl" style="left:1382.3px;top:75.5px;width:287.7px;height:26px"></div>
<div class="hl" style="left:1380px;top:361.6px;width:290px;height:23.8px"></div>
<!-- tabs -->
<div class="tab" style="left:930px;width:37.5px;background:#fff;top:1008px;height:18.5px;border-right:none"><span class="abs" style="left:5px;top:4px;letter-spacing:-0.200px;transform:scaleX(0.9374)">View</span></div>
<div class="tab" style="left:967.5px;width:81.5px"><span class="abs" style="left:3.5px;top:1px;letter-spacing:-0.200px;transform:scaleX(0.9230)">Referenced By (40)</span></div>
<div class="tab" style="left:1049px;width:47px"><span class="abs" style="left:4.5px;top:1px;letter-spacing:-0.200px;transform:scaleX(0.9075)">Messages</span></div>
<div class="tab" style="left:1096px;width:56.5px"><span class="abs" style="left:5px;top:1px;letter-spacing:-0.138px">Information</span></div>
<div class="tab" style="left:1152.5px;width:55px"><span class="abs" style="left:4.5px;top:1px;letter-spacing:-0.200px;transform:scaleX(0.9661)">What's New</span></div>
<i style="left:928px;top:1027px;width:990px;height:2.5px;background:#fcfcfc"></i><i style="left:1917.5px;top:1032.5px;width:1px;height:15px;background:#dcdcdc"></i>
<i style="left:0;top:1030px;width:1920px;height:1px;background:#e2e2e2"></i>
<!-- filter by filename -->
<span class="abs" style="left:12px;top:1011px;letter-spacing:-0.200px;transform:scaleX(0.9694)">F<u>i</u>lter by filename:</span>
<div class="inp" style="left:85px;top:1009.5px;width:840px;height:17px"></div>
<span class="abs" style="left:4px;top:1033px;letter-spacing:-0.200px;transform:scaleX(0.9628)">[00:34] Background Loader: finished</span>
<!-- taskbar -->
<div id="task">
<svg style="position:absolute;left:12px;top:8.6px" width="13" height="13" viewBox="0 0 13 13"><path d="M0 1.8 L5.4 1 L5.4 6.1 L0 6.1 Z M6.2 0.9 L12.6 0 L12.6 6.1 L6.2 6.1 Z M0 6.9 L5.4 6.9 L5.4 12 L0 11.2 Z M6.2 6.9 L12.6 6.9 L12.6 13 L6.2 12.1 Z" fill="#fff"/></svg>
<svg style="position:absolute;left:46.5px;top:6px" width="19" height="19" viewBox="0 0 19 19"><circle cx="9.5" cy="9.5" r="8.4" fill="none" stroke="#e0234e" stroke-width="1.5"/><ellipse cx="9.5" cy="9.5" rx="4.2" ry="7" fill="none" stroke="#e0234e" stroke-width="1.5"/></svg>
<svg style="position:absolute;left:83.5px;top:6.5px" width="18" height="18" viewBox="0 0 18 18"><defs><linearGradient id="sg" x1="0" y1="0" x2="0" y2="1"><stop offset="0" stop-color="#14285a"/><stop offset="1" stop-color="#1a78b8"/></linearGradient></defs><circle cx="9" cy="9" r="8.5" fill="url(#sg)"/><circle cx="11.8" cy="6.6" r="2.7" fill="none" stroke="#fff" stroke-width="1.2"/><circle cx="11.8" cy="6.6" r="1.2" fill="#dfe8f0"/><path d="M0.8 9.4 L6 11.6 L9.6 8.2" stroke="#fff" stroke-width="2.2" fill="none" stroke-linecap="round"/><circle cx="6.2" cy="12.2" r="1.9" fill="#fff"/></svg>
<svg style="position:absolute;left:121px;top:7.5px" width="18" height="15" viewBox="0 0 18 15"><path d="M0.5 1.2 L6 1.2 L7.4 2.8 L16.5 2.8 L16.5 13 L0.5 13 Z" fill="#f0b428"/><path d="M0.5 4.2 L16.5 4.2 L16.5 13 L0.5 13 Z" fill="#ffd858"/><path d="M4.4 8.4 L12.6 8.4 L12.6 13.4 L10.4 13.4 L10.4 10.6 L6.6 10.6 L6.6 13.4 L4.4 13.4 Z" fill="#3a96dd"/></svg>
<i style="left:148.5px;top:0;width:36.5px;height:30px;background:#0c4a82"></i>
<svg style="position:absolute;left:157.5px;top:6px" width="18" height="18" viewBox="0 0 13 13"><circle cx="6.5" cy="6.5" r="6" fill="#b9b5a6" stroke="#5c5c5c" stroke-width="0.8"/><circle cx="6.5" cy="6.5" r="4.9" fill="#d6cfb8"/><path d="M1.9 3.6 Q3.6 3.2 4.6 5 L4.4 9.6 Q3 10.2 2 9 Q1.2 6.4 1.9 3.6 Z" fill="#c4222c"/><path d="M11.1 3.6 Q9.4 3.2 8.4 5 L8.6 9.6 Q10 10.2 11 9 Q11.8 6.4 11.1 3.6 Z" fill="#c4222c"/><path d="M2.6 6.2 L4.4 6.6 L4.4 9.4 L2.8 9 Z" fill="#3a58a0"/><path d="M10.4 6.2 L8.6 6.6 L8.6 9.4 L10.2 9 Z" fill="#3a58a0"/><ellipse cx="6.5" cy="3.6" rx="1.5" ry="1.7" fill="#e8cf86"/><path d="M5.2 2.8 Q6.5 1 7.8 2.8 Q6.5 2.2 5.2 2.8Z" fill="#e0b040"/><rect x="5.4" y="5.2" width="2.2" height="5.4" rx="0.6" fill="#4060a8"/><rect x="6.15" y="5.2" width="0.7" height="5.4" fill="#e4cc5a"/></svg>
<i style="left:41px;top:28px;width:30px;height:2px;background:#8cc4f0"></i>
<i style="left:78px;top:28px;width:30px;height:2px;background:#8cc4f0"></i>
<i style="left:115px;top:28px;width:26px;height:2px;background:#8cc4f0"></i><i style="left:141.5px;top:28px;width:3.5px;height:2px;background:#5a88b0"></i>
<i style="left:148.5px;top:28px;width:36.5px;height:2px;background:#8cc4f0"></i>
<!-- tray -->
<svg style="position:absolute;left:1755px;top:11.5px" width="11" height="7" viewBox="0 0 11 7"><path d="M0.8 6 L5.5 1.2 L10.2 6" stroke="#fff" stroke-width="1.1" fill="none"/></svg>
<svg style="position:absolute;left:1772px;top:9.5px" width="13" height="12" viewBox="0 0 13 12"><rect x="3" y="1.2" width="9" height="6.4" fill="none" stroke="#fff" stroke-width="1"/><path d="M7.5 7.6 L7.5 10 M5 10.3 L10 10.3" stroke="#fff" stroke-width="1"/><rect x="0.5" y="0.5" width="3" height="4.6" fill="#0b1d2c" stroke="#fff" stroke-width="0.9"/><path d="M2 5 L2 9.6 L4.6 9.6" stroke="#fff" stroke-width="0.9" fill="none"/></svg>
<svg style="position:absolute;left:1790px;top:9.5px" width="14" height="12" viewBox="0 0 14 12"><path d="M0.8 4 L3 4 L6 1.2 L6 10.8 L3 8 L0.8 8 Z" fill="none" stroke="#fff" stroke-width="0.9"/><path d="M7.6 4 Q8.8 6 7.6 8" stroke="#fff" stroke-width="0.9" fill="none"/><path d="M9.4 2.6 Q11.4 6 9.4 9.4" stroke="#b0b8c0" stroke-width="0.8" fill="none"/><path d="M11.2 1.4 Q13.8 6 11.2 10.6" stroke="#7a8490" stroke-width="0.8" fill="none"/></svg>
<span class="abs" style="left:1810.5px;top:7.5px;letter-spacing:-0.200px;transform:scaleX(0.8364)">РУС</span>
<span class="abs" style="left:1839.5px;top:1px;letter-spacing:-0.200px;transform:scaleX(0.9389)">3:04 AM</span>
<span class="abs" style="left:1839px;top:14.3px;letter-spacing:-0.200px;transform:scaleX(0.9647)">2/2/2024</span>
<svg style="position:absolute;left:1888.5px;top:8.5px" width="14" height="13" viewBox="0 0 14 13"><path d="M1 1 L13 1 L13 9.4 L8.6 9.4 L7 11.6 L5.4 9.4 L1 9.4 Z" fill="none" stroke="#fff" stroke-width="1"/></svg>
<i style="left:1916.5px;top:0;width:1px;height:30px;background:#5a6670"></i>
</div>

</body></html>
